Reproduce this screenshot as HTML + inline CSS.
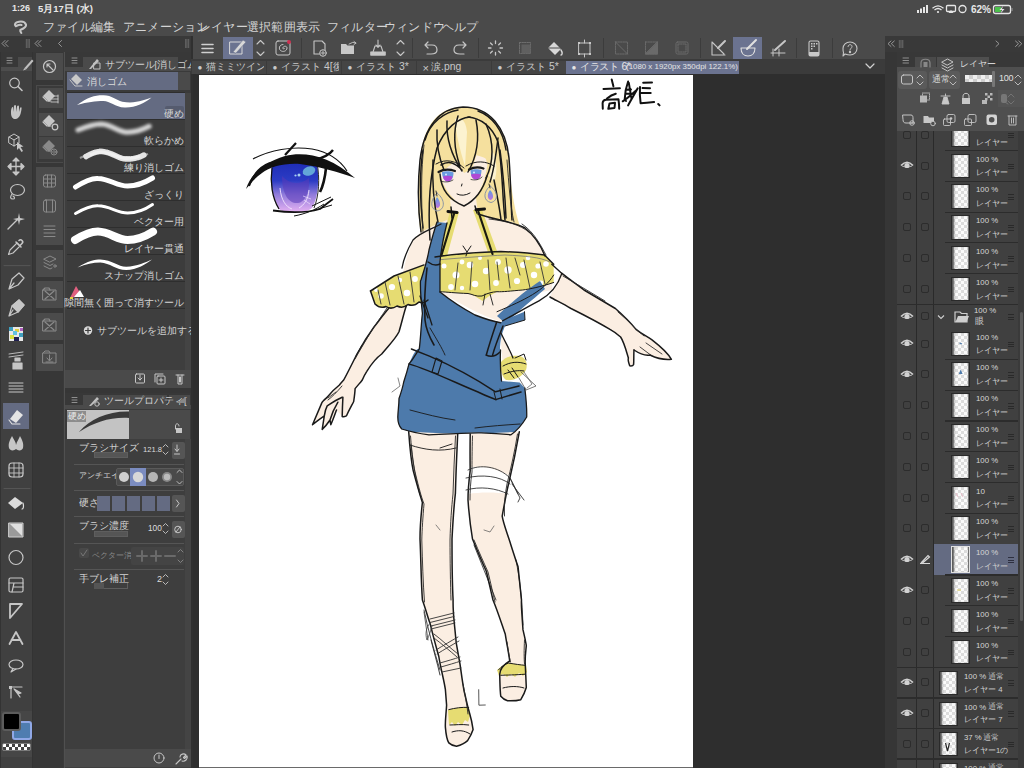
<!DOCTYPE html><html><head><meta charset="utf-8"><style>
*{margin:0;padding:0;box-sizing:border-box}
html,body{width:1024px;height:768px;overflow:hidden;background:#4a4a4a}
body{position:relative;font-family:"Liberation Sans",sans-serif}
div{position:absolute}
.t{white-space:nowrap;line-height:1}
svg{position:absolute;overflow:visible}
</style></head><body><div style="left:0px;top:0px;width:1024px;height:36px;background:#4a4a4a;"></div>
<div class="t" style="left:12px;top:4.42px;font-size:9px;color:#e8e8e8;font-weight:bold">1:26</div>
<div class="t" style="left:38px;top:4.36px;font-size:9.5px;color:#e8e8e8;font-weight:bold">5月17日 (水)</div>
<div class="t" style="left:971px;top:4.80px;font-size:10px;color:#e8e8e8;font-weight:bold">62%</div>
<div class="t" style="left:43px;top:22.27px;font-size:11.5px;color:#d4d4d4;letter-spacing:0.2px">ファイル</div>
<div class="t" style="left:91px;top:22.27px;font-size:11.5px;color:#d4d4d4;letter-spacing:0.2px">編集</div>
<div class="t" style="left:123px;top:22.27px;font-size:11.5px;color:#d4d4d4;letter-spacing:0.2px">アニメーション</div>
<div class="t" style="left:199px;top:22.27px;font-size:11.5px;color:#d4d4d4;letter-spacing:0.2px">レイヤー</div>
<div class="t" style="left:247px;top:22.27px;font-size:11.5px;color:#d4d4d4;letter-spacing:0.2px">選択範囲</div>
<div class="t" style="left:296px;top:22.27px;font-size:11.5px;color:#d4d4d4;letter-spacing:0.2px">表示</div>
<div class="t" style="left:327px;top:22.27px;font-size:11.5px;color:#d4d4d4;letter-spacing:0.2px">フィルター</div>
<div class="t" style="left:384px;top:22.27px;font-size:11.5px;color:#d4d4d4;letter-spacing:0.2px">ウィンドウ</div>
<div class="t" style="left:442px;top:22.27px;font-size:11.5px;color:#d4d4d4;letter-spacing:0.2px">ヘルプ</div>
<svg style="left:0;top:0" width="1024" height="36" viewBox="0 0 1024 36">
<g fill="#e6e6e6">
<rect x="917" y="10" width="2" height="3"/><rect x="920" y="8.5" width="2" height="4.5"/><rect x="923" y="7" width="2" height="6"/><rect x="926" y="5" width="2" height="8"/>
</g>
<g fill="none" stroke="#e6e6e6" stroke-width="1.3">
<path d="M932.5 8.2 Q938 3.5 943.5 8.2"/><path d="M934.5 10 Q938 7 941.5 10"/>
<rect x="946.5" y="5.5" width="9" height="6" rx="1"/>
<circle cx="962.5" cy="9" r="3.5"/>
<rect x="993.5" y="5.5" width="17" height="8" rx="2"/>
</g>
<circle cx="938" cy="12" r="1.1" fill="#e6e6e6"/>
<path d="M948.5 13 L951 10 L953.5 13 Z" fill="#e6e6e6"/>
<rect x="995" y="7" width="6" height="5" fill="#4cc14c"/>
<path d="M1003 6 L999.5 10 L1002 10 L1000.5 13.5 L1004.5 9 L1002 9 Z" fill="#e6e6e6"/>
<rect x="1011.5" y="8" width="1" height="3" fill="#999"/>
<path d="M21.5,25 C19.5,24.2 17.5,25.5 15.8,26.2 C14,24.5 15,22.3 19,21.7 C22.3,21.2 25.2,22.2 26,24.6 C26.6,27 24,28.6 20.3,30 C20,31 20.8,32.3 21.3,33" fill="none" stroke="#c6c6c6" stroke-width="2.1" stroke-linecap="round" stroke-linejoin="round"/>
</svg>
<div style="left:0px;top:36px;width:193px;height:16px;background:#393939;"></div>
<div style="left:885px;top:36px;width:139px;height:16px;background:#393939;"></div>
<div style="left:0px;top:52px;width:33px;height:716px;background:#333333;"></div>
<div style="left:1px;top:52px;width:31px;height:716px;background:#404040;"></div>
<div style="left:1px;top:52px;width:31px;height:15px;background:#383838;"></div>
<div style="left:18px;top:57px;width:14px;height:10px;background:#4a4a4a;"></div>
<div style="left:1px;top:67px;width:31px;height:4px;background:#4d4d4d;"></div>
<div style="left:3px;top:403px;width:26px;height:25.5px;background:#646b82;"></div>
<div style="left:1px;top:711px;width:31px;height:46px;background:#464646;"></div>
<div style="left:11.5px;top:720.8px;width:20.3px;height:19.5px;background:#4f7db0;border:2px solid #90a8e6;border-radius:3px"></div>
<div style="left:2px;top:712px;width:19px;height:18.5px;background:#000000;border:2px solid #5c5c5c;border-radius:3px"></div>
<div style="left:2px;top:742.8px;width:29px;height:8.6px;background:#ffffff;border:1px solid #7a7a7a;border-radius:2px;background-image:linear-gradient(45deg,#444 25%,transparent 25%,transparent 75%,#444 75%),linear-gradient(45deg,#444 25%,transparent 25%,transparent 75%,#444 75%);background-size:6px 6px;background-position:0 0,3px 3px"></div>
<svg style="left:0;top:0" width="40" height="360" viewBox="0 0 40 360">
<rect x="9" y="327" width="14" height="14" fill="#e8e8e8"/>
<rect x="9" y="327" width="4" height="4" fill="#40a0c0"/><rect x="15" y="329" width="4" height="3" fill="#e0d040"/><rect x="19" y="333" width="4" height="4" fill="#40a0c0"/><rect x="10" y="335" width="4" height="4" fill="#d8e040"/><rect x="14" y="337" width="5" height="4" fill="#202050"/><rect x="13" y="331" width="4" height="4" fill="#60c0e0"/><rect x="20" y="328" width="3" height="3" fill="#b060c0"/>
</svg>
<div style="left:33px;top:52px;width:30px;height:716px;background:#373737;"></div>
<div style="left:36px;top:53px;width:27px;height:27px;background:#4b4b4b;"></div>
<div style="left:36px;top:85px;width:28px;height:78px;background:#3a3a3a;border:1px solid #4a4a4a"></div>
<div style="left:39px;top:88px;width:24px;height:20px;background:#4b4b4b;"></div>
<div style="left:39px;top:113px;width:24px;height:23px;background:#4b4b4b;"></div>
<div style="left:39px;top:137px;width:24px;height:22px;background:#474747;"></div>
<div style="left:36px;top:167px;width:27px;height:78px;background:#4b4b4b;"></div>
<div style="left:36px;top:250px;width:27px;height:27px;background:#4b4b4b;"></div>
<div style="left:36px;top:281px;width:27px;height:27px;background:#4b4b4b;"></div>
<div style="left:36px;top:313px;width:27px;height:27px;background:#4b4b4b;"></div>
<div style="left:36px;top:344px;width:27px;height:27px;background:#4b4b4b;"></div>
<div style="left:63px;top:52px;width:2px;height:716px;background:#3a3a3a;"></div>
<div style="left:64.2px;top:52px;width:0.9px;height:716px;background:#505050;"></div>
<div style="left:65px;top:52px;width:126px;height:716px;background:#3e3e3e;"></div>
<div style="left:65px;top:52px;width:126px;height:15px;background:#383838;"></div>
<div style="left:83px;top:57px;width:95px;height:10px;background:#4a4a4a;"></div>
<div style="left:65px;top:67px;width:126px;height:4px;background:#4a4a4a;"></div>
<div style="left:65px;top:71px;width:126px;height:22px;background:#3a3a3a;"></div>
<div style="left:67px;top:72px;width:111px;height:18px;background:#646b82;"></div>
<div style="left:178px;top:72px;width:12px;height:18px;background:#4a4a4a;"></div>
<div class="t" style="left:104.5px;top:59.56px;font-size:9.6px;color:#d0d0d0;">サブツール[消しゴム]</div>
<div class="t" style="left:86.5px;top:76.50px;font-size:10px;color:#dcdcdc;">消しゴム</div>
<div style="left:185px;top:93px;width:6px;height:277px;background:#444444;"></div>
<div style="left:67px;top:92px;width:118px;height:1px;background:#2e2e2e;"></div>
<div style="left:67px;top:93px;width:118px;height:26px;background:#646b82;"></div>
<div style="left:165px;top:106px;width:18.5px;height:11.2px;background:#555b6e;border-radius:2px"></div>
<div class="t" style="right:840.5px;top:108.50px;font-size:10px;color:#d6d6d6;">硬め</div>
<div style="left:67px;top:119px;width:118px;height:1px;background:#2e2e2e;"></div>
<div style="left:67px;top:120px;width:118px;height:26px;background:#3c3c3c;"></div>
<div class="t" style="right:840.5px;top:135.50px;font-size:10px;color:#d6d6d6;">軟らかめ</div>
<div style="left:67px;top:146px;width:118px;height:1px;background:#2e2e2e;"></div>
<div style="left:67px;top:147px;width:118px;height:26px;background:#3c3c3c;"></div>
<div class="t" style="right:840.5px;top:162.50px;font-size:10px;color:#d6d6d6;">練り消しゴム</div>
<div style="left:67px;top:173px;width:118px;height:1px;background:#2e2e2e;"></div>
<div style="left:67px;top:174px;width:118px;height:26px;background:#3c3c3c;"></div>
<div class="t" style="right:840.5px;top:189.50px;font-size:10px;color:#d6d6d6;">ざっくり</div>
<div style="left:67px;top:200px;width:118px;height:1px;background:#2e2e2e;"></div>
<div style="left:67px;top:201px;width:118px;height:26px;background:#3c3c3c;"></div>
<div class="t" style="right:840.5px;top:216.50px;font-size:10px;color:#d6d6d6;">ベクター用</div>
<div style="left:67px;top:227px;width:118px;height:1px;background:#2e2e2e;"></div>
<div style="left:67px;top:228px;width:118px;height:26px;background:#3c3c3c;"></div>
<div class="t" style="right:840.5px;top:243.50px;font-size:10px;color:#d6d6d6;">レイヤー貫通</div>
<div style="left:67px;top:254px;width:118px;height:1px;background:#2e2e2e;"></div>
<div style="left:67px;top:255px;width:118px;height:26px;background:#3c3c3c;"></div>
<div class="t" style="right:840.5px;top:270.50px;font-size:10px;color:#d6d6d6;">スナップ消しゴム</div>
<div style="left:67px;top:281px;width:118px;height:1px;background:#2e2e2e;"></div>
<div style="left:67px;top:282px;width:118px;height:26px;background:#3c3c3c;"></div>
<div class="t" style="right:840.5px;top:297.50px;font-size:10px;color:#d6d6d6;">隙間無く囲って消すツール</div>
<div style="left:67px;top:308px;width:118px;height:1px;background:#2e2e2e;"></div>
<div class="t" style="left:97px;top:325.50px;font-size:10px;color:#d0d0d0;">サブツールを追加する</div>
<div style="left:65px;top:370px;width:126px;height:18px;background:#4a4a4a;"></div>
<div style="left:65px;top:388px;width:126px;height:5px;background:#363636;"></div>
<div style="left:65px;top:393px;width:126px;height:12px;background:#383838;"></div>
<div style="left:83px;top:395px;width:84px;height:10px;background:#4a4a4a;"></div>
<div style="left:169px;top:395px;width:21px;height:10px;background:#4a4a4a;"></div>
<div style="left:65px;top:405px;width:126px;height:4px;background:#4a4a4a;"></div>
<div class="t" style="left:104px;top:395.56px;font-size:9.6px;color:#d0d0d0;">ツールプロパティ[</div>
<div style="left:65px;top:409px;width:126px;height:30px;background:#3a3a3a;"></div>
<div style="left:67px;top:410px;width:62px;height:28.6px;background:#c3c3c3;"></div>
<div style="left:129px;top:410px;width:61px;height:28.6px;background:#4a4a4a;"></div>
<div style="left:67px;top:411px;width:19px;height:11px;background:#8c8c8c;"></div>
<div class="t" style="left:67.5px;top:411.65px;font-size:9px;color:#eeeeee;">硬め</div>
<div style="left:65px;top:439px;width:126px;height:310px;background:#3e3e3e;"></div>
<div style="left:185px;top:439px;width:6px;height:310px;background:#444444;"></div>
<div class="t" style="left:79px;top:442.50px;font-size:10px;color:#d4d4d4;">ブラシサイズ</div>
<div style="left:94px;top:452px;width:34px;height:6px;background:#555555;border:1px solid #5e5e5e"></div>
<div class="t" style="left:143px;top:446.09px;font-size:7.6px;color:#dcdcdc;">121.8</div>
<div style="left:172px;top:442px;width:12.5px;height:17px;background:#555555;border-radius:2px"></div>
<div style="left:74px;top:464px;width:110px;height:1px;background:#555555;"></div>
<div class="t" style="left:79px;top:471.86px;font-size:7.6px;color:#d4d4d4;">アンチエイリ</div>
<div style="left:116px;top:468px;width:68px;height:18px;background:#4a4a4a;border:1px solid #5a5a5a;border-radius:2px"></div>
<div style="left:130px;top:468px;width:16px;height:18px;background:#7b8cc0;"></div>
<div style="left:74px;top:490px;width:110px;height:1px;background:#555555;"></div>
<div class="t" style="left:79px;top:497.57px;font-size:9.5px;color:#d4d4d4;">硬さ</div>
<div style="left:97px;top:496px;width:13px;height:15px;background:#646b82;"></div>
<div style="left:112px;top:496px;width:13px;height:15px;background:#646b82;"></div>
<div style="left:127px;top:496px;width:13px;height:15px;background:#646b82;"></div>
<div style="left:142px;top:496px;width:13px;height:15px;background:#646b82;"></div>
<div style="left:157px;top:496px;width:13px;height:15px;background:#646b82;"></div>
<div style="left:172px;top:495px;width:12.5px;height:17px;background:#555555;border-radius:2px"></div>
<div style="left:74px;top:516px;width:110px;height:1px;background:#555555;"></div>
<div class="t" style="left:79px;top:520.50px;font-size:10px;color:#d4d4d4;">ブラシ濃度</div>
<div style="left:94px;top:531px;width:34px;height:6px;background:#555555;border:1px solid #5e5e5e"></div>
<div class="t" style="left:148px;top:524.00px;font-size:8.3px;color:#dcdcdc;">100</div>
<div style="left:172px;top:521px;width:12.5px;height:17px;background:#555555;border-radius:2px"></div>
<div style="left:74px;top:543px;width:110px;height:1px;background:#555555;"></div>
<div style="left:79px;top:548px;width:10px;height:10px;background:#484848;border-radius:2px"></div>
<div class="t" style="left:92px;top:551.80px;font-size:8px;color:#8a8a8a;">ベクター消去</div>
<div style="left:131px;top:547px;width:53px;height:18px;background:#444444;border-radius:2px"></div>
<div style="left:74px;top:569px;width:110px;height:1px;background:#555555;"></div>
<div class="t" style="left:79px;top:573.50px;font-size:10px;color:#d4d4d4;">手ブレ補正</div>
<div style="left:94px;top:583px;width:34px;height:6px;background:#3e3e3e;border-bottom:1px solid #5e5e5e;border-right:1px solid #5e5e5e"></div>
<div style="left:94px;top:583px;width:10px;height:6px;background:#555555;"></div>
<div class="t" style="left:157px;top:574.92px;font-size:9px;color:#dcdcdc;">2</div>
<div style="left:65px;top:749px;width:126px;height:18px;background:#4a4a4a;"></div>
<div style="left:191px;top:36px;width:2px;height:732px;background:#303030;"></div>
<div style="left:193px;top:36px;width:692px;height:23px;background:#4a4a4a;"></div>
<div style="left:222.5px;top:37px;width:30px;height:22px;background:#6b7390;"></div>
<div style="left:732.5px;top:37px;width:29.5px;height:22px;background:#6b7390;"></div>
<div style="left:300.5px;top:38px;width:1px;height:20px;background:#3c3c3c;"></div>
<div style="left:412px;top:38px;width:1px;height:20px;background:#3c3c3c;"></div>
<div style="left:477.5px;top:38px;width:1px;height:20px;background:#3c3c3c;"></div>
<div style="left:603px;top:38px;width:1px;height:20px;background:#3c3c3c;"></div>
<div style="left:700px;top:38px;width:1px;height:20px;background:#3c3c3c;"></div>
<div style="left:795.5px;top:38px;width:1px;height:20px;background:#3c3c3c;"></div>
<div style="left:831.5px;top:38px;width:1px;height:20px;background:#3c3c3c;"></div>
<div style="left:191px;top:59px;width:694px;height:15px;background:#3b3b3b;"></div>
<div style="left:192px;top:60.5px;width:74px;height:13.5px;background:#454545;overflow:hidden"></div>
<div class="t" style="left:197.5px;top:63.54px;font-size:8px;color:#c8c8c8;">●</div>
<div style="left:206px;top:60.5px;width:58px;height:13.5px;overflow:hidden"><div class="t" style="left:0;top:1.94px;font-size:10.4px;color:#c8c8c8">猫ミミツインテ</div></div>
<div style="left:267px;top:60.5px;width:74px;height:13.5px;background:#454545;overflow:hidden"></div>
<div class="t" style="left:272.5px;top:63.54px;font-size:8px;color:#c8c8c8;">●</div>
<div style="left:281px;top:60.5px;width:58px;height:13.5px;overflow:hidden"><div class="t" style="left:0;top:1.94px;font-size:10.4px;color:#c8c8c8">イラスト 4[復元</div></div>
<div style="left:342px;top:60.5px;width:74px;height:13.5px;background:#454545;overflow:hidden"></div>
<div class="t" style="left:347.5px;top:63.54px;font-size:8px;color:#c8c8c8;">●</div>
<div style="left:356px;top:60.5px;width:58px;height:13.5px;overflow:hidden"><div class="t" style="left:0;top:1.94px;font-size:10.4px;color:#c8c8c8">イラスト 3*</div></div>
<div style="left:417px;top:60.5px;width:74px;height:13.5px;background:#454545;overflow:hidden"></div>
<div class="t" style="left:422.5px;top:63.18px;font-size:11px;color:#c8c8c8;">×</div>
<div style="left:431px;top:60.5px;width:58px;height:13.5px;overflow:hidden"><div class="t" style="left:0;top:1.94px;font-size:10.4px;color:#c8c8c8">涙.png</div></div>
<div style="left:492px;top:60.5px;width:74px;height:13.5px;background:#454545;overflow:hidden"></div>
<div class="t" style="left:497.5px;top:63.54px;font-size:8px;color:#c8c8c8;">●</div>
<div style="left:506px;top:60.5px;width:58px;height:13.5px;overflow:hidden"><div class="t" style="left:0;top:1.94px;font-size:10.4px;color:#c8c8c8">イラスト 5*</div></div>
<div style="left:566px;top:60.5px;width:173px;height:13.5px;background:#6b7390;"></div>
<div class="t" style="left:571.5px;top:63.54px;font-size:8px;color:#e4e4e4;">●</div>
<div class="t" style="left:580px;top:62.44px;font-size:10.4px;color:#e4e4e4;letter-spacing:-0.3px">イラスト 6*</div>
<div class="t" style="left:626px;top:63.05px;font-size:7.9px;color:#e4e4e4;">(1080 x 1920px 350dpi 122.1%)</div>
<div style="left:193px;top:74px;width:692px;height:694px;background:#2e2e2e;"></div>
<div style="left:198.75px;top:74.7px;width:494.3px;height:692.3px;background:#ffffff;"></div>
<div style="left:198.75px;top:767px;width:494.3px;height:1px;background:#6a6a6a;"></div>
<div style="left:885px;top:52px;width:139px;height:79px;background:#383838;"></div>
<div style="left:885px;top:52px;width:12px;height:716px;background:#363636;"></div>
<div style="left:897px;top:52px;width:121px;height:716px;background:#404040;"></div>
<div style="left:1018px;top:131px;width:6px;height:637px;background:#3a3a3a;"></div>
<div style="left:1019.5px;top:312px;width:3px;height:309px;background:#5a5a5a;border-radius:2px"></div>
<div style="left:916px;top:131px;width:1px;height:637px;background:#2a2a2a;"></div>
<div style="left:933px;top:131px;width:1px;height:637px;background:#2a2a2a;"></div>
<div style="left:944.5px;top:149.9px;width:73.5px;height:1.2px;background:#2c2c2c;"></div>
<div style="left:903px;top:130.7px;width:8px;height:8px;background:transparent;border:1px solid #2c2c2c;border-radius:2px"></div>
<div style="left:921px;top:130.7px;width:8px;height:8px;background:transparent;border:1px solid #2c2c2c;border-radius:2px"></div>
<div style="left:950.5px;top:122.7px;width:19px;height:24.5px;background:#fafafa;background-image:linear-gradient(45deg,#dcdcdc 25%,transparent 25%,transparent 75%,#dcdcdc 75%),linear-gradient(45deg,#dcdcdc 25%,transparent 25%,transparent 75%,#dcdcdc 75%);background-size:6px 6px;background-position:0 0,3px 3px;border:1px solid #2a2a2a;box-shadow:inset 3px 0 2px -1px #555, inset -2px 0 1px -1px #666"></div>
<div class="t" style="left:976px;top:124.76px;font-size:7.8px;color:#d6d6d6;">100 %</div>
<div class="t" style="left:976px;top:138.54px;font-size:7.7px;color:#cfcfcf;">レイヤー</div>
<div style="left:1008px;top:132.7px;width:6px;height:1.1px;background:#2a2a2a;"></div>
<div style="left:1008px;top:135.0px;width:6px;height:1.1px;background:#2a2a2a;"></div>
<div style="left:1008px;top:137.29999999999998px;width:6px;height:1.1px;background:#2a2a2a;"></div>
<div style="left:944.5px;top:180.70000000000002px;width:73.5px;height:1.2px;background:#2c2c2c;"></div>
<svg style="left:899.5px;top:160.0px" width="14" height="10" viewBox="0 0 14 10"><path d="M1 5.5 Q7 -1 13 5.5" fill="none" stroke="#d2d2d2" stroke-width="1.6"/><path d="M2 6 Q7 9 12 6" fill="none" stroke="#d2d2d2" stroke-width="0.8"/><circle cx="7" cy="5.5" r="2.6" fill="#d2d2d2"/></svg>
<div style="left:921px;top:161.5px;width:8px;height:8px;background:transparent;border:1px solid #2c2c2c;border-radius:2px"></div>
<div style="left:950.5px;top:153.5px;width:19px;height:24.5px;background:#fafafa;background-image:linear-gradient(45deg,#dcdcdc 25%,transparent 25%,transparent 75%,#dcdcdc 75%),linear-gradient(45deg,#dcdcdc 25%,transparent 25%,transparent 75%,#dcdcdc 75%);background-size:6px 6px;background-position:0 0,3px 3px;border:1px solid #2a2a2a;box-shadow:inset 3px 0 2px -1px #555, inset -2px 0 1px -1px #666"></div>
<div class="t" style="left:976px;top:155.56px;font-size:7.8px;color:#d6d6d6;">100 %</div>
<div class="t" style="left:976px;top:169.34px;font-size:7.7px;color:#cfcfcf;">レイヤー</div>
<div style="left:1008px;top:163.5px;width:6px;height:1.1px;background:#2a2a2a;"></div>
<div style="left:1008px;top:165.8px;width:6px;height:1.1px;background:#2a2a2a;"></div>
<div style="left:1008px;top:168.1px;width:6px;height:1.1px;background:#2a2a2a;"></div>
<div style="left:944.5px;top:211.50000000000003px;width:73.5px;height:1.2px;background:#2c2c2c;"></div>
<div style="left:903px;top:192.3px;width:8px;height:8px;background:transparent;border:1px solid #2c2c2c;border-radius:2px"></div>
<div style="left:921px;top:192.3px;width:8px;height:8px;background:transparent;border:1px solid #2c2c2c;border-radius:2px"></div>
<div style="left:950.5px;top:184.3px;width:19px;height:24.5px;background:#fafafa;background-image:linear-gradient(45deg,#dcdcdc 25%,transparent 25%,transparent 75%,#dcdcdc 75%),linear-gradient(45deg,#dcdcdc 25%,transparent 25%,transparent 75%,#dcdcdc 75%);background-size:6px 6px;background-position:0 0,3px 3px;border:1px solid #2a2a2a;box-shadow:inset 3px 0 2px -1px #555, inset -2px 0 1px -1px #666"></div>
<div class="t" style="left:976px;top:186.36px;font-size:7.8px;color:#d6d6d6;">100 %</div>
<div class="t" style="left:976px;top:200.15px;font-size:7.7px;color:#cfcfcf;">レイヤー</div>
<div style="left:1008px;top:194.3px;width:6px;height:1.1px;background:#2a2a2a;"></div>
<div style="left:1008px;top:196.60000000000002px;width:6px;height:1.1px;background:#2a2a2a;"></div>
<div style="left:1008px;top:198.9px;width:6px;height:1.1px;background:#2a2a2a;"></div>
<div style="left:944.5px;top:242.3px;width:73.5px;height:1.2px;background:#2c2c2c;"></div>
<div style="left:903px;top:223.1px;width:8px;height:8px;background:transparent;border:1px solid #2c2c2c;border-radius:2px"></div>
<div style="left:921px;top:223.1px;width:8px;height:8px;background:transparent;border:1px solid #2c2c2c;border-radius:2px"></div>
<div style="left:950.5px;top:215.1px;width:19px;height:24.5px;background:#fafafa;background-image:linear-gradient(45deg,#dcdcdc 25%,transparent 25%,transparent 75%,#dcdcdc 75%),linear-gradient(45deg,#dcdcdc 25%,transparent 25%,transparent 75%,#dcdcdc 75%);background-size:6px 6px;background-position:0 0,3px 3px;border:1px solid #2a2a2a;box-shadow:inset 3px 0 2px -1px #555, inset -2px 0 1px -1px #666"></div>
<div class="t" style="left:976px;top:217.16px;font-size:7.8px;color:#d6d6d6;">100 %</div>
<div class="t" style="left:976px;top:230.94px;font-size:7.7px;color:#cfcfcf;">レイヤー</div>
<div style="left:1008px;top:225.1px;width:6px;height:1.1px;background:#2a2a2a;"></div>
<div style="left:1008px;top:227.4px;width:6px;height:1.1px;background:#2a2a2a;"></div>
<div style="left:1008px;top:229.7px;width:6px;height:1.1px;background:#2a2a2a;"></div>
<div style="left:944.5px;top:273.09999999999997px;width:73.5px;height:1.2px;background:#2c2c2c;"></div>
<div style="left:903px;top:253.9px;width:8px;height:8px;background:transparent;border:1px solid #2c2c2c;border-radius:2px"></div>
<div style="left:921px;top:253.9px;width:8px;height:8px;background:transparent;border:1px solid #2c2c2c;border-radius:2px"></div>
<div style="left:950.5px;top:245.9px;width:19px;height:24.5px;background:#fafafa;background-image:linear-gradient(45deg,#dcdcdc 25%,transparent 25%,transparent 75%,#dcdcdc 75%),linear-gradient(45deg,#dcdcdc 25%,transparent 25%,transparent 75%,#dcdcdc 75%);background-size:6px 6px;background-position:0 0,3px 3px;border:1px solid #2a2a2a;box-shadow:inset 3px 0 2px -1px #555, inset -2px 0 1px -1px #666"></div>
<div class="t" style="left:976px;top:247.96px;font-size:7.8px;color:#d6d6d6;">100 %</div>
<div class="t" style="left:976px;top:261.75px;font-size:7.7px;color:#cfcfcf;">レイヤー</div>
<div style="left:1008px;top:255.9px;width:6px;height:1.1px;background:#2a2a2a;"></div>
<div style="left:1008px;top:258.2px;width:6px;height:1.1px;background:#2a2a2a;"></div>
<div style="left:1008px;top:260.5px;width:6px;height:1.1px;background:#2a2a2a;"></div>
<div style="left:944.5px;top:303.9px;width:73.5px;height:1.2px;background:#2c2c2c;"></div>
<div style="left:903px;top:284.7px;width:8px;height:8px;background:transparent;border:1px solid #2c2c2c;border-radius:2px"></div>
<div style="left:921px;top:284.7px;width:8px;height:8px;background:transparent;border:1px solid #2c2c2c;border-radius:2px"></div>
<div style="left:950.5px;top:276.7px;width:19px;height:24.5px;background:#fafafa;background-image:linear-gradient(45deg,#dcdcdc 25%,transparent 25%,transparent 75%,#dcdcdc 75%),linear-gradient(45deg,#dcdcdc 25%,transparent 25%,transparent 75%,#dcdcdc 75%);background-size:6px 6px;background-position:0 0,3px 3px;border:1px solid #2a2a2a;box-shadow:inset 3px 0 2px -1px #555, inset -2px 0 1px -1px #666"></div>
<div class="t" style="left:976px;top:278.76px;font-size:7.8px;color:#d6d6d6;">100 %</div>
<div class="t" style="left:976px;top:292.55px;font-size:7.7px;color:#cfcfcf;">レイヤー</div>
<div style="left:1008px;top:286.7px;width:6px;height:1.1px;background:#2a2a2a;"></div>
<div style="left:1008px;top:289.0px;width:6px;height:1.1px;background:#2a2a2a;"></div>
<div style="left:1008px;top:291.3px;width:6px;height:1.1px;background:#2a2a2a;"></div>
<div style="left:944.5px;top:358.8px;width:73.5px;height:1.2px;background:#2c2c2c;"></div>
<svg style="left:899.5px;top:338.1px" width="14" height="10" viewBox="0 0 14 10"><path d="M1 5.5 Q7 -1 13 5.5" fill="none" stroke="#d2d2d2" stroke-width="1.6"/><path d="M2 6 Q7 9 12 6" fill="none" stroke="#d2d2d2" stroke-width="0.8"/><circle cx="7" cy="5.5" r="2.6" fill="#d2d2d2"/></svg>
<div style="left:921px;top:339.6px;width:8px;height:8px;background:transparent;border:1px solid #2c2c2c;border-radius:2px"></div>
<div style="left:950.5px;top:331.6px;width:19px;height:24.5px;background:#fafafa;background-image:linear-gradient(45deg,#dcdcdc 25%,transparent 25%,transparent 75%,#dcdcdc 75%),linear-gradient(45deg,#dcdcdc 25%,transparent 25%,transparent 75%,#dcdcdc 75%);background-size:6px 6px;background-position:0 0,3px 3px;border:1px solid #2a2a2a;box-shadow:inset 3px 0 2px -1px #555, inset -2px 0 1px -1px #666"></div>
<div class="t" style="left:976px;top:333.66px;font-size:7.8px;color:#d6d6d6;">100 %</div>
<div class="t" style="left:976px;top:347.45px;font-size:7.7px;color:#cfcfcf;">レイヤー</div>
<div style="left:1008px;top:341.6px;width:6px;height:1.1px;background:#2a2a2a;"></div>
<div style="left:1008px;top:343.90000000000003px;width:6px;height:1.1px;background:#2a2a2a;"></div>
<div style="left:1008px;top:346.20000000000005px;width:6px;height:1.1px;background:#2a2a2a;"></div>
<div style="left:944.5px;top:389.59999999999997px;width:73.5px;height:1.2px;background:#2c2c2c;"></div>
<svg style="left:899.5px;top:368.9px" width="14" height="10" viewBox="0 0 14 10"><path d="M1 5.5 Q7 -1 13 5.5" fill="none" stroke="#d2d2d2" stroke-width="1.6"/><path d="M2 6 Q7 9 12 6" fill="none" stroke="#d2d2d2" stroke-width="0.8"/><circle cx="7" cy="5.5" r="2.6" fill="#d2d2d2"/></svg>
<div style="left:921px;top:370.4px;width:8px;height:8px;background:transparent;border:1px solid #2c2c2c;border-radius:2px"></div>
<div style="left:950.5px;top:362.4px;width:19px;height:24.5px;background:#fafafa;background-image:linear-gradient(45deg,#dcdcdc 25%,transparent 25%,transparent 75%,#dcdcdc 75%),linear-gradient(45deg,#dcdcdc 25%,transparent 25%,transparent 75%,#dcdcdc 75%);background-size:6px 6px;background-position:0 0,3px 3px;border:1px solid #2a2a2a;box-shadow:inset 3px 0 2px -1px #555, inset -2px 0 1px -1px #666"></div>
<div class="t" style="left:976px;top:364.46px;font-size:7.8px;color:#d6d6d6;">100 %</div>
<div class="t" style="left:976px;top:378.25px;font-size:7.7px;color:#cfcfcf;">レイヤー</div>
<div style="left:1008px;top:372.4px;width:6px;height:1.1px;background:#2a2a2a;"></div>
<div style="left:1008px;top:374.7px;width:6px;height:1.1px;background:#2a2a2a;"></div>
<div style="left:1008px;top:377.0px;width:6px;height:1.1px;background:#2a2a2a;"></div>
<div style="left:944.5px;top:420.4px;width:73.5px;height:1.2px;background:#2c2c2c;"></div>
<div style="left:903px;top:401.2px;width:8px;height:8px;background:transparent;border:1px solid #2c2c2c;border-radius:2px"></div>
<div style="left:921px;top:401.2px;width:8px;height:8px;background:transparent;border:1px solid #2c2c2c;border-radius:2px"></div>
<div style="left:950.5px;top:393.2px;width:19px;height:24.5px;background:#fafafa;background-image:linear-gradient(45deg,#dcdcdc 25%,transparent 25%,transparent 75%,#dcdcdc 75%),linear-gradient(45deg,#dcdcdc 25%,transparent 25%,transparent 75%,#dcdcdc 75%);background-size:6px 6px;background-position:0 0,3px 3px;border:1px solid #2a2a2a;box-shadow:inset 3px 0 2px -1px #555, inset -2px 0 1px -1px #666"></div>
<div class="t" style="left:976px;top:395.26px;font-size:7.8px;color:#d6d6d6;">100 %</div>
<div class="t" style="left:976px;top:409.05px;font-size:7.7px;color:#cfcfcf;">レイヤー</div>
<div style="left:1008px;top:403.2px;width:6px;height:1.1px;background:#2a2a2a;"></div>
<div style="left:1008px;top:405.5px;width:6px;height:1.1px;background:#2a2a2a;"></div>
<div style="left:1008px;top:407.8px;width:6px;height:1.1px;background:#2a2a2a;"></div>
<div style="left:944.5px;top:451.2px;width:73.5px;height:1.2px;background:#2c2c2c;"></div>
<div style="left:903px;top:432.0px;width:8px;height:8px;background:transparent;border:1px solid #2c2c2c;border-radius:2px"></div>
<div style="left:921px;top:432.0px;width:8px;height:8px;background:transparent;border:1px solid #2c2c2c;border-radius:2px"></div>
<div style="left:950.5px;top:424.0px;width:19px;height:24.5px;background:#fafafa;background-image:linear-gradient(45deg,#dcdcdc 25%,transparent 25%,transparent 75%,#dcdcdc 75%),linear-gradient(45deg,#dcdcdc 25%,transparent 25%,transparent 75%,#dcdcdc 75%);background-size:6px 6px;background-position:0 0,3px 3px;border:1px solid #2a2a2a;box-shadow:inset 3px 0 2px -1px #555, inset -2px 0 1px -1px #666"></div>
<div class="t" style="left:976px;top:426.06px;font-size:7.8px;color:#d6d6d6;">100 %</div>
<div class="t" style="left:976px;top:439.85px;font-size:7.7px;color:#cfcfcf;">レイヤー</div>
<div style="left:1008px;top:434.0px;width:6px;height:1.1px;background:#2a2a2a;"></div>
<div style="left:1008px;top:436.3px;width:6px;height:1.1px;background:#2a2a2a;"></div>
<div style="left:1008px;top:438.6px;width:6px;height:1.1px;background:#2a2a2a;"></div>
<div style="left:944.5px;top:482.0px;width:73.5px;height:1.2px;background:#2c2c2c;"></div>
<div style="left:903px;top:462.8px;width:8px;height:8px;background:transparent;border:1px solid #2c2c2c;border-radius:2px"></div>
<div style="left:921px;top:462.8px;width:8px;height:8px;background:transparent;border:1px solid #2c2c2c;border-radius:2px"></div>
<div style="left:950.5px;top:454.8px;width:19px;height:24.5px;background:#fafafa;background-image:linear-gradient(45deg,#dcdcdc 25%,transparent 25%,transparent 75%,#dcdcdc 75%),linear-gradient(45deg,#dcdcdc 25%,transparent 25%,transparent 75%,#dcdcdc 75%);background-size:6px 6px;background-position:0 0,3px 3px;border:1px solid #2a2a2a;box-shadow:inset 3px 0 2px -1px #555, inset -2px 0 1px -1px #666"></div>
<div class="t" style="left:976px;top:456.86px;font-size:7.8px;color:#d6d6d6;">100 %</div>
<div class="t" style="left:976px;top:470.65px;font-size:7.7px;color:#cfcfcf;">レイヤー</div>
<div style="left:1008px;top:464.8px;width:6px;height:1.1px;background:#2a2a2a;"></div>
<div style="left:1008px;top:467.1px;width:6px;height:1.1px;background:#2a2a2a;"></div>
<div style="left:1008px;top:469.40000000000003px;width:6px;height:1.1px;background:#2a2a2a;"></div>
<div style="left:944.5px;top:512.8px;width:73.5px;height:1.2px;background:#2c2c2c;"></div>
<div style="left:903px;top:493.6px;width:8px;height:8px;background:transparent;border:1px solid #2c2c2c;border-radius:2px"></div>
<div style="left:921px;top:493.6px;width:8px;height:8px;background:transparent;border:1px solid #2c2c2c;border-radius:2px"></div>
<div style="left:950.5px;top:485.6px;width:19px;height:24.5px;background:#fafafa;background-image:linear-gradient(45deg,#dcdcdc 25%,transparent 25%,transparent 75%,#dcdcdc 75%),linear-gradient(45deg,#dcdcdc 25%,transparent 25%,transparent 75%,#dcdcdc 75%);background-size:6px 6px;background-position:0 0,3px 3px;border:1px solid #2a2a2a;box-shadow:inset 3px 0 2px -1px #555, inset -2px 0 1px -1px #666"></div>
<div class="t" style="left:976px;top:487.64px;font-size:8px;color:#d6d6d6;">10</div>
<div class="t" style="left:976px;top:501.45px;font-size:7.7px;color:#cfcfcf;">レイヤー</div>
<div style="left:1008px;top:495.6px;width:6px;height:1.1px;background:#2a2a2a;"></div>
<div style="left:1008px;top:497.90000000000003px;width:6px;height:1.1px;background:#2a2a2a;"></div>
<div style="left:1008px;top:500.20000000000005px;width:6px;height:1.1px;background:#2a2a2a;"></div>
<div style="left:944.5px;top:543.5999999999999px;width:73.5px;height:1.2px;background:#2c2c2c;"></div>
<div style="left:903px;top:524.4px;width:8px;height:8px;background:transparent;border:1px solid #2c2c2c;border-radius:2px"></div>
<div style="left:921px;top:524.4px;width:8px;height:8px;background:transparent;border:1px solid #2c2c2c;border-radius:2px"></div>
<div style="left:950.5px;top:516.4px;width:19px;height:24.5px;background:#fafafa;background-image:linear-gradient(45deg,#dcdcdc 25%,transparent 25%,transparent 75%,#dcdcdc 75%),linear-gradient(45deg,#dcdcdc 25%,transparent 25%,transparent 75%,#dcdcdc 75%);background-size:6px 6px;background-position:0 0,3px 3px;border:1px solid #2a2a2a;box-shadow:inset 3px 0 2px -1px #555, inset -2px 0 1px -1px #666"></div>
<div class="t" style="left:976px;top:518.46px;font-size:7.8px;color:#d6d6d6;">100 %</div>
<div class="t" style="left:976px;top:532.25px;font-size:7.7px;color:#cfcfcf;">レイヤー</div>
<div style="left:1008px;top:526.4px;width:6px;height:1.1px;background:#2a2a2a;"></div>
<div style="left:1008px;top:528.6999999999999px;width:6px;height:1.1px;background:#2a2a2a;"></div>
<div style="left:1008px;top:531.0px;width:6px;height:1.1px;background:#2a2a2a;"></div>
<div style="left:933.5px;top:544.2px;width:84.5px;height:30.8px;background:#646b82;"></div>
<div style="left:944.5px;top:574.4px;width:73.5px;height:1.2px;background:#2c2c2c;"></div>
<svg style="left:899.5px;top:553.7px" width="14" height="10" viewBox="0 0 14 10"><path d="M1 5.5 Q7 -1 13 5.5" fill="none" stroke="#d2d2d2" stroke-width="1.6"/><path d="M2 6 Q7 9 12 6" fill="none" stroke="#d2d2d2" stroke-width="0.8"/><circle cx="7" cy="5.5" r="2.6" fill="#d2d2d2"/></svg>
<svg style="left:919px;top:553.2px" width="12" height="12" viewBox="0 0 12 12"><path d="M1 10.5 H11 M2 10 L9 2.5 L10.5 4 L3.5 10" fill="none" stroke="#d8d8d8" stroke-width="1.2"/></svg>
<div style="left:950.5px;top:545.7px;width:19px;height:27px;background:#fafafa;background-image:linear-gradient(45deg,#dcdcdc 25%,transparent 25%,transparent 75%,#dcdcdc 75%),linear-gradient(45deg,#dcdcdc 25%,transparent 25%,transparent 75%,#dcdcdc 75%);background-size:6px 6px;background-position:0 0,3px 3px;border:1px solid #2a2a2a;box-shadow:inset 3px 0 2px -1px #555, inset -2px 0 1px -1px #666"></div>
<div style="left:950.5px;top:545.7px;width:19px;height:27px;background:transparent;border:1px solid #e0e0e0"></div>
<div class="t" style="left:976px;top:549.26px;font-size:7.8px;color:#d6d6d6;">100 %</div>
<div class="t" style="left:976px;top:563.05px;font-size:7.7px;color:#cfcfcf;">レイヤー</div>
<div style="left:1008px;top:557.2px;width:6px;height:1.1px;background:#2e3040;"></div>
<div style="left:1008px;top:559.5px;width:6px;height:1.1px;background:#2e3040;"></div>
<div style="left:1008px;top:561.8000000000001px;width:6px;height:1.1px;background:#2e3040;"></div>
<div style="left:944.5px;top:605.1999999999999px;width:73.5px;height:1.2px;background:#2c2c2c;"></div>
<svg style="left:899.5px;top:584.5px" width="14" height="10" viewBox="0 0 14 10"><path d="M1 5.5 Q7 -1 13 5.5" fill="none" stroke="#d2d2d2" stroke-width="1.6"/><path d="M2 6 Q7 9 12 6" fill="none" stroke="#d2d2d2" stroke-width="0.8"/><circle cx="7" cy="5.5" r="2.6" fill="#d2d2d2"/></svg>
<div style="left:921px;top:586.0px;width:8px;height:8px;background:transparent;border:1px solid #2c2c2c;border-radius:2px"></div>
<div style="left:950.5px;top:578.0px;width:19px;height:24.5px;background:#fafafa;background-image:linear-gradient(45deg,#dcdcdc 25%,transparent 25%,transparent 75%,#dcdcdc 75%),linear-gradient(45deg,#dcdcdc 25%,transparent 25%,transparent 75%,#dcdcdc 75%);background-size:6px 6px;background-position:0 0,3px 3px;border:1px solid #2a2a2a;box-shadow:inset 3px 0 2px -1px #555, inset -2px 0 1px -1px #666"></div>
<div class="t" style="left:976px;top:580.06px;font-size:7.8px;color:#d6d6d6;">100 %</div>
<div class="t" style="left:976px;top:593.85px;font-size:7.7px;color:#cfcfcf;">レイヤー</div>
<div style="left:1008px;top:588.0px;width:6px;height:1.1px;background:#2a2a2a;"></div>
<div style="left:1008px;top:590.3px;width:6px;height:1.1px;background:#2a2a2a;"></div>
<div style="left:1008px;top:592.6px;width:6px;height:1.1px;background:#2a2a2a;"></div>
<div style="left:944.5px;top:635.9999999999999px;width:73.5px;height:1.2px;background:#2c2c2c;"></div>
<div style="left:903px;top:616.8px;width:8px;height:8px;background:transparent;border:1px solid #2c2c2c;border-radius:2px"></div>
<div style="left:921px;top:616.8px;width:8px;height:8px;background:transparent;border:1px solid #2c2c2c;border-radius:2px"></div>
<div style="left:950.5px;top:608.8px;width:19px;height:24.5px;background:#fafafa;background-image:linear-gradient(45deg,#dcdcdc 25%,transparent 25%,transparent 75%,#dcdcdc 75%),linear-gradient(45deg,#dcdcdc 25%,transparent 25%,transparent 75%,#dcdcdc 75%);background-size:6px 6px;background-position:0 0,3px 3px;border:1px solid #2a2a2a;box-shadow:inset 3px 0 2px -1px #555, inset -2px 0 1px -1px #666"></div>
<div class="t" style="left:976px;top:610.86px;font-size:7.8px;color:#d6d6d6;">100 %</div>
<div class="t" style="left:976px;top:624.64px;font-size:7.7px;color:#cfcfcf;">レイヤー</div>
<div style="left:1008px;top:618.8px;width:6px;height:1.1px;background:#2a2a2a;"></div>
<div style="left:1008px;top:621.0999999999999px;width:6px;height:1.1px;background:#2a2a2a;"></div>
<div style="left:1008px;top:623.4px;width:6px;height:1.1px;background:#2a2a2a;"></div>
<div style="left:944.5px;top:666.8px;width:73.5px;height:1.2px;background:#2c2c2c;"></div>
<div style="left:903px;top:647.6px;width:8px;height:8px;background:transparent;border:1px solid #2c2c2c;border-radius:2px"></div>
<div style="left:921px;top:647.6px;width:8px;height:8px;background:transparent;border:1px solid #2c2c2c;border-radius:2px"></div>
<div style="left:950.5px;top:639.6px;width:19px;height:24.5px;background:#fafafa;background-image:linear-gradient(45deg,#dcdcdc 25%,transparent 25%,transparent 75%,#dcdcdc 75%),linear-gradient(45deg,#dcdcdc 25%,transparent 25%,transparent 75%,#dcdcdc 75%);background-size:6px 6px;background-position:0 0,3px 3px;border:1px solid #2a2a2a;box-shadow:inset 3px 0 2px -1px #555, inset -2px 0 1px -1px #666"></div>
<div class="t" style="left:976px;top:641.66px;font-size:7.8px;color:#d6d6d6;">100 %</div>
<div class="t" style="left:976px;top:655.45px;font-size:7.7px;color:#cfcfcf;">レイヤー</div>
<div style="left:1008px;top:649.6px;width:6px;height:1.1px;background:#2a2a2a;"></div>
<div style="left:1008px;top:651.9px;width:6px;height:1.1px;background:#2a2a2a;"></div>
<div style="left:1008px;top:654.2px;width:6px;height:1.1px;background:#2a2a2a;"></div>
<div style="left:897px;top:303.79999999999995px;width:121px;height:1.2px;background:#2c2c2c;"></div>
<svg style="left:899.5px;top:310.9px" width="14" height="10" viewBox="0 0 14 10"><path d="M1 5.5 Q7 -1 13 5.5" fill="none" stroke="#d2d2d2" stroke-width="1.6"/><path d="M2 6 Q7 9 12 6" fill="none" stroke="#d2d2d2" stroke-width="0.8"/><circle cx="7" cy="5.5" r="2.6" fill="#d2d2d2"/></svg>
<div style="left:921px;top:312.4px;width:8px;height:8px;background:transparent;border:1px solid #2c2c2c;border-radius:2px"></div>
<svg style="left:936px;top:314.4px" width="10" height="6" viewBox="0 0 10 6"><path d="M2 1.5 L5 4.5 L8 1.5" fill="none" stroke="#cfcfcf" stroke-width="1.1"/></svg>
<svg style="left:954px;top:310.4px" width="16" height="13" viewBox="0 0 16 13"><path d="M1 2 H6 L7.5 3.5 H13 V12 H1 Z" fill="none" stroke="#cfcfcf" stroke-width="1.2"/><path d="M1.5 12 L4 6 H15 L12.5 12 Z" fill="#cfcfcf"/></svg>
<div class="t" style="left:974px;top:307.46px;font-size:7.8px;color:#d6d6d6;">100 %</div>
<div class="t" style="left:975px;top:317.05px;font-size:9px;color:#cfcfcf;">眼</div>
<div style="left:1008px;top:314.4px;width:6px;height:1.1px;background:#2a2a2a;"></div>
<div style="left:1008px;top:316.7px;width:6px;height:1.1px;background:#2a2a2a;"></div>
<div style="left:1008px;top:319.0px;width:6px;height:1.1px;background:#2a2a2a;"></div>
<div style="left:897px;top:666.8px;width:121px;height:1.2px;background:#2c2c2c;"></div>
<svg style="left:899.5px;top:676.9px" width="14" height="10" viewBox="0 0 14 10"><path d="M1 5.5 Q7 -1 13 5.5" fill="none" stroke="#d2d2d2" stroke-width="1.6"/><path d="M2 6 Q7 9 12 6" fill="none" stroke="#d2d2d2" stroke-width="0.8"/><circle cx="7" cy="5.5" r="2.6" fill="#d2d2d2"/></svg>
<div style="left:921px;top:678.4px;width:8px;height:8px;background:transparent;border:1px solid #2c2c2c;border-radius:2px"></div>
<div style="left:938.5px;top:670.9px;width:19px;height:24px;background:#fafafa;background-image:linear-gradient(45deg,#dcdcdc 25%,transparent 25%,transparent 75%,#dcdcdc 75%),linear-gradient(45deg,#dcdcdc 25%,transparent 25%,transparent 75%,#dcdcdc 75%);background-size:6px 6px;background-position:0 0,3px 3px;border:1px solid #2a2a2a;box-shadow:inset 3px 0 2px -1px #555, inset -2px 0 1px -1px #666"></div>
<div class="t" style="left:964px;top:672.96px;font-size:7.8px;color:#d6d6d6;">100 %</div>
<div class="t" style="left:988px;top:672.70px;font-size:8px;color:#bfbfbf;">通常</div>
<div class="t" style="left:964px;top:685.75px;font-size:7.7px;color:#cfcfcf;">レイヤー 4</div>
<div style="left:1008px;top:680.4px;width:6px;height:1.1px;background:#2a2a2a;"></div>
<div style="left:1008px;top:682.6999999999999px;width:6px;height:1.1px;background:#2a2a2a;"></div>
<div style="left:1008px;top:685.0px;width:6px;height:1.1px;background:#2a2a2a;"></div>
<div style="left:897px;top:697.4px;width:121px;height:1.2px;background:#2c2c2c;"></div>
<svg style="left:899.5px;top:707.5px" width="14" height="10" viewBox="0 0 14 10"><path d="M1 5.5 Q7 -1 13 5.5" fill="none" stroke="#d2d2d2" stroke-width="1.6"/><path d="M2 6 Q7 9 12 6" fill="none" stroke="#d2d2d2" stroke-width="0.8"/><circle cx="7" cy="5.5" r="2.6" fill="#d2d2d2"/></svg>
<div style="left:921px;top:709.0px;width:8px;height:8px;background:transparent;border:1px solid #2c2c2c;border-radius:2px"></div>
<div style="left:938.5px;top:701.5px;width:19px;height:24px;background:#fafafa;background-image:linear-gradient(45deg,#dcdcdc 25%,transparent 25%,transparent 75%,#dcdcdc 75%),linear-gradient(45deg,#dcdcdc 25%,transparent 25%,transparent 75%,#dcdcdc 75%);background-size:6px 6px;background-position:0 0,3px 3px;border:1px solid #2a2a2a;box-shadow:inset 3px 0 2px -1px #555, inset -2px 0 1px -1px #666"></div>
<div class="t" style="left:964px;top:703.56px;font-size:7.8px;color:#d6d6d6;">100 %</div>
<div class="t" style="left:988px;top:703.30px;font-size:8px;color:#bfbfbf;">通常</div>
<div class="t" style="left:964px;top:716.35px;font-size:7.7px;color:#cfcfcf;">レイヤー 7</div>
<div style="left:1008px;top:711.0px;width:6px;height:1.1px;background:#2a2a2a;"></div>
<div style="left:1008px;top:713.3px;width:6px;height:1.1px;background:#2a2a2a;"></div>
<div style="left:1008px;top:715.6px;width:6px;height:1.1px;background:#2a2a2a;"></div>
<div style="left:897px;top:727.9px;width:121px;height:1.2px;background:#2c2c2c;"></div>
<div style="left:903px;top:739.5px;width:8px;height:8px;background:transparent;border:1px solid #2c2c2c;border-radius:2px"></div>
<div style="left:921px;top:739.5px;width:8px;height:8px;background:transparent;border:1px solid #2c2c2c;border-radius:2px"></div>
<div style="left:938.5px;top:732.0px;width:19px;height:24px;background:#fafafa;background-image:linear-gradient(45deg,#dcdcdc 25%,transparent 25%,transparent 75%,#dcdcdc 75%),linear-gradient(45deg,#dcdcdc 25%,transparent 25%,transparent 75%,#dcdcdc 75%);background-size:6px 6px;background-position:0 0,3px 3px;border:1px solid #2a2a2a;box-shadow:inset 3px 0 2px -1px #555, inset -2px 0 1px -1px #666"></div>
<div class="t" style="left:964px;top:734.06px;font-size:7.8px;color:#d6d6d6;">37 %</div>
<div class="t" style="left:983px;top:733.80px;font-size:8px;color:#bfbfbf;">通常</div>
<div class="t" style="left:964px;top:746.85px;font-size:7.7px;color:#cfcfcf;">レイヤー1の</div>
<div style="left:1008px;top:741.5px;width:6px;height:1.1px;background:#2a2a2a;"></div>
<div style="left:1008px;top:743.8px;width:6px;height:1.1px;background:#2a2a2a;"></div>
<div style="left:1008px;top:746.1px;width:6px;height:1.1px;background:#2a2a2a;"></div>
<div style="left:897px;top:758.4px;width:121px;height:1.2px;background:#2c2c2c;"></div>
<div style="left:903px;top:770.0px;width:8px;height:8px;background:transparent;border:1px solid #2c2c2c;border-radius:2px"></div>
<div style="left:921px;top:770.0px;width:8px;height:8px;background:transparent;border:1px solid #2c2c2c;border-radius:2px"></div>
<div style="left:938.5px;top:762.5px;width:19px;height:24px;background:#fafafa;background-image:linear-gradient(45deg,#dcdcdc 25%,transparent 25%,transparent 75%,#dcdcdc 75%),linear-gradient(45deg,#dcdcdc 25%,transparent 25%,transparent 75%,#dcdcdc 75%);background-size:6px 6px;background-position:0 0,3px 3px;border:1px solid #2a2a2a;box-shadow:inset 3px 0 2px -1px #555, inset -2px 0 1px -1px #666"></div>
<div class="t" style="left:964px;top:764.56px;font-size:7.8px;color:#d6d6d6;">100 %</div>
<div class="t" style="left:988px;top:764.30px;font-size:8px;color:#bfbfbf;">通常</div>
<div style="left:1008px;top:772.0px;width:6px;height:1.1px;background:#2a2a2a;"></div>
<div style="left:1008px;top:774.3px;width:6px;height:1.1px;background:#2a2a2a;"></div>
<div style="left:1008px;top:776.6px;width:6px;height:1.1px;background:#2a2a2a;"></div>
<div style="left:897px;top:52px;width:121px;height:15px;background:#383838;"></div>
<div style="left:915px;top:57px;width:21px;height:10px;background:#4a4a4a;"></div>
<div style="left:937px;top:57px;width:52px;height:10px;background:#4f4f4f;"></div>
<div class="t" style="left:960px;top:59.65px;font-size:9px;color:#d8d8d8;">レイヤー</div>
<div style="left:897px;top:67px;width:127px;height:64px;background:#4f4f4f;"></div>
<div style="left:898.3px;top:71.3px;width:29px;height:17.7px;background:#5a5a5a;border-radius:3px"></div>
<div style="left:929.4px;top:71.3px;width:30.8px;height:17.7px;background:#5a5a5a;border-radius:3px"></div>
<div class="t" style="left:932px;top:74.61px;font-size:9.3px;color:#d8d8d8;">通常</div>
<div style="left:964.8px;top:75px;width:27px;height:6.6px;background:#eeeeee;background-image:linear-gradient(45deg,#cfcfcf 25%,transparent 25%,transparent 75%,#cfcfcf 75%),linear-gradient(45deg,#cfcfcf 25%,transparent 25%,transparent 75%,#cfcfcf 75%);background-size:8px 8px;background-position:0 0,4px 4px"></div>
<div style="left:992.2px;top:71.3px;width:2.4px;height:15.3px;background:#777777;border-radius:1px"></div>
<div class="t" style="left:999px;top:73.92px;font-size:9px;color:#e0e0e0;letter-spacing:-0.3px">100</div>
<div style="left:998px;top:90px;width:26px;height:17.4px;background:#545454;"></div>
<svg style="left:0;top:0" width="1024" height="768" viewBox="0 0 1024 768">
<path d="M959.5,343 L962,344" stroke="#4d7aab" stroke-width="1.2"/>
<path d="M960.7,369.5 L958.8,374 L962.6,374 Z" fill="#4d7aab"/>
<path d="M956,493 L958,497 M961,493 L963,497" stroke="#e8b0c0" stroke-width="0.8"/>
<path d="M957,590 L961,590" stroke="#e0d060" stroke-width="1"/>
<path d="M945.5,743 L947.5,751 L949.5,743" stroke="#222" stroke-width="1.1" fill="none"/>
<path d="M957,436 L962,438" stroke="#777" stroke-width="0.6"/>
</svg>
<svg style="left:0;top:0" width="1024" height="768" viewBox="0 0 1024 768">
<defs><filter id="bl" x="-20%" y="-100%" width="140%" height="300%"><feGaussianBlur stdDeviation="1.6"/></filter></defs>
<g fill="none" stroke="#c6c6c6" stroke-width="1.2" stroke-linecap="round" stroke-linejoin="round">
<path d="M5,40.5 L2,43.5 L5,46.5 M8,40.5 L5,43.5 L8,46.5" stroke="#9a9a9a" stroke-width="0.95"/>
<path d="M38,40.5 L35,43.5 L38,46.5 M41,40.5 L38,43.5 L41,46.5" stroke="#9a9a9a" stroke-width="0.95"/>
<path d="M61.5,40.5 L58.5,43.5 L61.5,46.5" stroke="#9a9a9a" stroke-width="0.95"/>
<rect x="25.8" y="39" width="4.2" height="9" fill="#5e5e5e" stroke="none"/><rect x="27.5" y="39" width="0.9" height="9" fill="#444" stroke="none"/>
<rect x="185" y="39" width="4.2" height="9" fill="#5e5e5e" stroke="none"/><rect x="186.7" y="39" width="0.9" height="9" fill="#444" stroke="none"/>
<path d="M891,41 L888,43.7 L891,46.5 M894.3,41 L891.3,43.7 L894.3,46.5" stroke="#9a9a9a" stroke-width="0.95"/>
<rect x="898.8" y="40" width="4.6" height="8" fill="#5e5e5e" stroke="none"/><rect x="900.6" y="40" width="0.9" height="8" fill="#444" stroke="none"/>
<path d="M996,41 L999,43.7 L996,46.5" stroke="#9a9a9a" stroke-width="0.95"/>
<path d="M1015.5,41 L1018.5,43.7 L1015.5,46.5 M1018.8,41 L1021.8,43.7 L1018.8,46.5" stroke="#9a9a9a" stroke-width="0.95"/>
<path d="M7,58 H12 M7,60.5 H12 M7,63 H12" stroke="#9a9a9a" stroke-width="0.9"/>
<path d="M72,58 H77 M72,60.5 H77 M72,63 H77" stroke="#9a9a9a" stroke-width="0.9"/>
<path d="M72,397.5 H77 M72,400 H77 M72,402.5 H77" stroke="#9a9a9a" stroke-width="0.9"/>
<path d="M903,58 H908.5 M903,60.5 H908.5 M903,63 H908.5" stroke="#9a9a9a" stroke-width="0.9"/>
<path d="M24.5,68 L32,59.5 L33.5,61 L26,69.5 Z" fill="#c0c0c0" stroke="none"/><path d="M24.5,68 L23,70.5 L26,69.5 Z" fill="#c0c0c0" stroke="none"/>
<path d="M89,69 L97,59 L99,61 L91,69 Z" fill="#c0c0c0" stroke="none"/>
<rect x="94" y="63" width="6" height="6" stroke="#c0c0c0" stroke-width="1"/>
<path d="M89,406 L97,397 L99,399 L91,406 Z" fill="#c0c0c0" stroke="none"/>
<circle cx="97" cy="404" r="2.2" stroke="#c0c0c0" stroke-width="1"/>
<path d="M176,403 L186,397 L186,403 Z" fill="#888" stroke="none"/>

<circle cx="14.5" cy="83" r="4.8"/><path d="M18,86.5 L22,90.5" stroke-width="1.6"/>
<path d="M11,113 C11,108 12,107 13,107 L13,112 L14,106 C14.5,104.5 15.8,104.5 16,106 L16,112 L17,106.5 C17.5,105 19,105 19,106.5 L19,112 L20,108 C20.5,107 22,107 21.5,109 C21,113 20,118 16,119 C13,119.5 11,117 11,113 Z" fill="#c6c6c6" stroke="none"/>
<path d="M9,137 L14,134 L19,137 V143 L14,146 L9,143 Z M9,137 L14,140 L19,137 M14,140 V146" stroke-width="1"/>
<path d="M17,142 L17,150 L19,148 L21.5,152 L23,151 L20.5,147 L23.5,146.5 Z" fill="#c6c6c6" stroke="none"/>
<path d="M16,159 V174 M8.5,166.5 H23.5" stroke-width="1.3"/>
<path d="M13,161 L16,158 L19,161 Z M13,172 L16,175 L19,172 Z M11,163.5 L8,166.5 L11,169.5 Z M21,163.5 L24,166.5 L21,169.5 Z" fill="#c6c6c6"/>
<ellipse cx="17.5" cy="190" rx="7" ry="5.5"/><path d="M12,194 C10,197 10,199 13,199 C15,199 15,197 13,196"/>
<path d="M8,229 L17,220" stroke-width="1.4"/><path d="M19,213 L20,218 L25,219 L20,220.5 L19,225 L18,220.5 L13,219 L18,218 Z" fill="#c6c6c6" stroke="none"/>
<path d="M8.5,254.5 L10,250 L17,243 L20,246 L13,253 Z" stroke-width="1.1"/><path d="M16,242 L21,247 M19,240.5 C21,238.5 24,241.5 22,243.5 L20.5,245" stroke-width="1.6"/>
<path d="M4,265.6 H30" stroke="#555" stroke-width="1"/>
<path d="M9,289 L12,279 L19,273 L24,278 L18,285 Z M9,289 L14,283" stroke-width="1.2"/>
<path d="M9,316 L12,306 L19,300 L24,305 L18,312 Z M9,316 L13,310" stroke-width="1.2"/><path d="M12,306 L19,300 L24,305 L18,312 Z" fill="#c6c6c6"/>
<path d="M9,354 L23,352 M9,357 L23,355" stroke-width="0.9"/>
<path d="M13,363 H22 V369 H13 Z" fill="#c6c6c6"/><path d="M15,361 H20 V358 H15 Z" fill="#c6c6c6"/>
<path d="M9,383 H23 M9,386 H23 M9,389 H23 M9,392 H23" stroke-width="1"/>
<path d="M10,419 L17,410 L23,415 L16,423 Z" fill="#e4e4e4" stroke="none"/><path d="M9,420 L12,424 H20" stroke="#e4e4e4" stroke-width="1.1"/>
<path d="M9,448 C8,443 10,440 12,436 C14,440 16,442 16,445 C17,441 19,439 20,436 C22,440 24,443 23,448 C22,451 18,451 16,449 C14,451 10,451 9,448 Z" fill="#c6c6c6" stroke="none"/>
<rect x="9" y="463" width="14" height="14" rx="3"/><path d="M9,468 H23 M9,473 H23 M14,463 V477 M19,463 V477" stroke-width="0.9"/>
<path d="M4,488.5 H30" stroke="#555" stroke-width="1"/>
<path d="M8,503 L15,497 L23,503 L15,509 Z" fill="#dcdcdc" stroke="none"/><path d="M23,503 C24,506 23.5,509 22,509" stroke="#dcdcdc"/>
<rect x="9" y="523" width="14" height="14" fill="#9a9a9a" stroke="#cfcfcf" stroke-width="1"/><path d="M10,524 L22,536 V524 Z" fill="#e0e0e0" stroke="none"/>
<circle cx="16" cy="557.5" r="7"/>
<rect x="9" y="578" width="14" height="14" rx="1.5"/><path d="M9,583 H23 M14,583 L12,592 M14,587 H23"/>
<path d="M10,604 H22 L10,618 Z" stroke-width="1.8"/>
<path d="M9.5,644 L16,632 L22.5,644 M11.5,640 H20.5" stroke-width="1.8"/>
<ellipse cx="16" cy="664.5" rx="7" ry="4.5"/><path d="M13,668.5 L11,672 L16,669"/>
<path d="M11,687 V698 M11,687 H22" stroke-width="1.2"/><rect x="9" y="686" width="3" height="3" fill="#c6c6c6" stroke="none"/><path d="M14,689 L21,693 L18,694 L20,697 L14,689" fill="#c6c6c6"/>

<circle cx="49.5" cy="66.5" r="6"/><path d="M47,64 L53,70 M47,64 H50 M47,64 V67" stroke-width="1.1"/>
<path d="M43,96 L49,90 L55,96 L49,102 Z" fill="#c6c6c6" stroke="none"/><path d="M43,97 L47,101 L51,101" stroke="#c6c6c6"/>
<path d="M51,96 H58 M51,99 H58 M51,102 H58 M58,95 V103" stroke-width="0.9"/>
<path d="M43,121 L49,115 L55,121 L49,127 Z" fill="#c6c6c6" stroke="none"/><path d="M43,122 L47,126 L51,126"/>
<circle cx="55" cy="127" r="2.8" stroke-width="1.2"/>
<path d="M43,146 L49,140 L55,146 L49,152 Z" fill="#8a8a8a" stroke="none"/><path d="M43,147 L47,151 L51,151" stroke="#8a8a8a"/>
<circle cx="54" cy="152" r="3" stroke="#8a8a8a" stroke-width="1"/><circle cx="54" cy="152" r="1.3" stroke="#8a8a8a" stroke-width="0.8"/>
<g stroke="#8a8a8a" stroke-width="1">
<rect x="43.5" y="175" width="12" height="12" rx="2"/><path d="M43.5,179 H55.5 M43.5,183 H55.5 M47.5,175 V187 M51.5,175 V187"/>
<rect x="43.5" y="200" width="12" height="12" rx="2"/><path d="M46.5,200 V212 M52.5,200 V212"/>
<path d="M44,226 H55 M44,229.5 H55 M44,233 H55 M44,236.5 H55"/>
<path d="M44,259 L50,256 L56,259 L50,262 Z M44,262.5 L50,265.5 L53,264 M44,266 L50,269 L52,268"/><circle cx="55" cy="266" r="1.2"/>
<rect x="43" y="290" width="13" height="10"/><path d="M43,290 L45,288 H49 L50,290 M45,291 L54,299 M54,291 L45,299" stroke-width="1.2"/>
<rect x="43" y="321" width="13" height="10"/><path d="M43,321 L45,319 H49 L50,321 M45,322 L54,330 M54,322 L45,330" stroke-width="1.2"/>
<rect x="43" y="353" width="13" height="10"/><path d="M43,353 L45,351 H49 L50,353 M49.5,355 V360 M47,358 L49.5,361 L52,358 M46,362 H53"/>
</g>

<path d="M71,79 L76,74 L82,80 L77,85 Z" fill="#c8c8c8" stroke="none"/><path d="M70,80 L75,86 H82" stroke="#c8c8c8" stroke-width="1"/>
<circle cx="88" cy="330.5" r="4.2" fill="#d8d8d8" stroke="none"/><path d="M85.5,330.5 H90.5 M88,328 V333" stroke="#3e3e3e" stroke-width="1.2"/>
<rect x="135.5" y="374" width="9" height="9" rx="1" stroke-width="1"/><path d="M140,375 V380 M138,378 L140,380 L142,378" stroke-width="1"/>
<rect x="157" y="376" width="8" height="8" rx="1" stroke-width="1"/><path d="M155,382 V374 H163" stroke-width="1"/><path d="M161,378 V382 M159,380 H163" stroke-width="1"/>
<path d="M176,375 H184 M178,375 V384 H182 V375 M179.5,377 V382 M180.5,377 V382" stroke-width="1"/>
<path d="M175.5,429 V426 C175.5,423 179,423 179,426" stroke-width="1"/><rect x="176" y="428" width="6" height="5" fill="#c6c6c6" stroke="none"/>
<circle cx="159" cy="758" r="5" stroke-width="1"/><path d="M159,755 V758.5" stroke-width="1"/>
<path d="M176,764 L181,759 M180,757 C180,754 184,753 186,755 L183.5,757.5 L184.5,758.5 L187,756 C188,759 185,762 182,761" stroke-width="1.1"/>
<path d="M177,445 V451 M175,449 L177,451.5 L179,449 M174.5,454 H179.5" stroke-width="1"/>
<path d="M163,447 L165.5,444.5 L168,447 M163,452 L165.5,454.5 L168,452" stroke-width="0.9"/>
<circle cx="124" cy="477" r="5" fill="#cfcfcf" stroke="none"/>
<circle cx="138" cy="477" r="5.2" fill="#d8d8d8" stroke="none"/>
<circle cx="153" cy="477" r="5" fill="#b5b5b5" stroke="none"/>
<circle cx="167" cy="477" r="5" fill="#888" stroke="none"/><circle cx="167" cy="477" r="3.2" fill="#bbb" stroke="none"/>
<path d="M177,472.5 L179.5,470 L182,472.5 M177,481.5 L179.5,484 L182,481.5" stroke-width="0.9"/>
<path d="M176.5,500 L179,503.5 L176.5,507" stroke-width="1"/>
<path d="M163,526 L165.5,523.5 L168,526 M163,531 L165.5,533.5 L168,531" stroke-width="0.9"/>
<circle cx="178" cy="529.5" r="3.3" stroke-width="1"/><path d="M176,532 L180,527" stroke-width="1"/>
<path d="M81,553 L83,556 L87,550" stroke="#777" stroke-width="1"/>
<path d="M137,556 H147 M142,551 V561 M151,556 H161 M156,551 V561 M165,556 H175" stroke="#6a6a6a" stroke-width="2"/>
<path d="M178,552 L180.5,549.5 L183,552 M178,560 L180.5,562.5 L183,560" stroke="#888" stroke-width="0.9"/>
<path d="M163,577 L165.5,574.5 L168,577 M163,582 L165.5,584.5 L168,582" stroke-width="0.9"/>
<path d="M79,432 C90,419 108,411 129,411.5 L129,418 C110,417 95,422 79,432 Z" fill="#3a3a3a" stroke="none"/>

<path d="M202,44.5 H213 M202,48.5 H213 M202,52.5 H213" stroke="#d0d0d0" stroke-width="1.6"/>
<rect x="230" y="42" width="12" height="12" stroke="#d8d8d8" stroke-width="1"/><path d="M233,52 L243,40 L246,42 L236,53 Z" fill="#d8d8d8" stroke="#6b7390" stroke-width="0.6"/>
<path d="M257,44 L260.5,40.5 L264,44 M257,52 L260.5,55.5 L264,52" stroke="#c8c8c8" stroke-width="1.1"/>
<rect x="276" y="41" width="14" height="14" rx="2" stroke-width="1"/><path d="M283,44.5 C279,44.5 278.5,49 280.5,50.5 C283,52.5 287,51 287,48 C287,46 284,45.5 283,47.5 C282.5,49 284,49.5 284.5,48.5" stroke-width="1"/><circle cx="289" cy="42" r="2" fill="#d03050" stroke="none"/>
<path d="M314,41 H322 L325,44 V54 H314 Z" stroke-width="1.1"/><circle cx="323" cy="53" r="3.3" fill="#4a4a4a" stroke-width="1"/><path d="M321,53 H325 M323,51 V55" stroke-width="0.9"/>
<path d="M341,44 H346 L347.5,45.5 H354 V54 H341 Z" fill="#c8c8c8" stroke="none"/><path d="M349,44 Q353,41 356,43 M354,41.5 L356,43 L354,44.5" stroke-width="0.9"/>
<path d="M371,52 V55 H385 V52 M373,52 L375,46 H381 L383,52" stroke-width="1.1"/><path d="M371,52 H385 V55 H371 Z" fill="#c8c8c8"/><path d="M378,40 V47 M376,45 L378,47.5 L380,45" stroke-width="1.1"/>
<path d="M397,44 L400.5,40.5 L404,44 M397,52 L400.5,55.5 L404,52" stroke="#c8c8c8" stroke-width="1.1"/>
<path d="M425,45 H432 C436,45 437,48 437,50 C437,53 434,54 431,54 H427 M428,42 L425,45 L428,48" stroke-width="1.2"/>
<path d="M466,45 H459 C455,45 454,48 454,50 C454,53 457,54 460,54 H464 M463,42 L466,45 L463,48" stroke-width="1.2"/>
<g stroke-width="1.3"><path d="M495.5,41 V43.5 M495.5,52.5 V55 M488.5,48 H491 M500,48 H502.5 M490.5,43 L492.3,44.8 M498.7,51.2 L500.5,53 M490.5,53 L492.3,51.2 M498.7,44.8 L500.5,43"/></g>
<rect x="519.5" y="42.5" width="11" height="11" stroke="#6e6e6e" stroke-dasharray="1.5 1" stroke-width="1"/><rect x="521.5" y="44.5" width="9" height="9" fill="#606060" stroke="none"/>
<path d="M548,48 L554,42 L561,49 L555,55 Z" fill="#d8d8d8" stroke="none"/><path d="M548,48 H561" stroke="#4a4a4a" stroke-width="1"/><path d="M561,50 C563,53 562,55 561,55" stroke="#d8d8d8" stroke-width="1.4"/>
<rect x="579" y="43" width="11" height="11" stroke-width="1"/><path d="M584.5,40 V43 M584.5,54 V57" stroke-width="1"/><g fill="#c8c8c8" stroke="none"><rect x="578" y="42" width="2" height="2"/><rect x="589" y="42" width="2" height="2"/><rect x="578" y="53" width="2" height="2"/><rect x="589" y="53" width="2" height="2"/></g>
<g stroke="#6a6a6a" stroke-width="1"><rect x="615.5" y="42" width="12" height="12" stroke-dasharray="1.5 1"/><path d="M615.5,42 L627.5,54"/>
<rect x="645.5" y="42" width="12" height="12" stroke-dasharray="1.5 1"/><path d="M657.5,42 V54 H645.5 Z" fill="#6a6a6a"/>
<rect x="676" y="42" width="12" height="12" rx="1.5"/><rect x="678" y="44" width="8" height="8" stroke-dasharray="1.5 1"/></g>
<path d="M712,42 V55 H725 M712,42 L724,54" stroke-width="1.1"/><path d="M718,48 L725,41" stroke-width="2"/>
<path d="M741,48 H755 C755,53 752,56 748,56 C744,56 741,53 741,48 Z" stroke="#e0e0e0" stroke-width="1.1"/><path d="M747,49 L756,40" stroke="#e0e0e0" stroke-width="2"/>
<path d="M771,53 H785 M773,49 V56 M779,49 V56" stroke-width="1"/><path d="M775,50 L785,41" stroke-width="2"/>
<rect x="809" y="41" width="10" height="15" rx="1.5" stroke-width="1.1"/><g fill="#c8c8c8" stroke="none"><rect x="811" y="43" width="1.5" height="1.5"/><rect x="813.5" y="43" width="1.5" height="1.5"/><rect x="816" y="43" width="1.5" height="1.5"/><rect x="811" y="45.5" width="1.5" height="1.5"/><rect x="813.5" y="45.5" width="1.5" height="1.5"/><rect x="811" y="48" width="1.5" height="1.5"/><rect x="809" y="52" width="10" height="4"/></g>
<path d="M850,42 C854,42 857,45 857,48.5 C857,52 854,55 850,55 C848,55 846.5,54.5 845,54 L843,56 L843.5,52.5 C843,51.5 843,50 843,48.5 C843,45 846,42 850,42 Z" stroke-width="1.1"/>
<path d="M848,46.5 C848,44 852,44 852,46.5 C852,48 850,48.5 850,50" stroke-width="1"/><circle cx="850" cy="52" r="0.6" fill="#c8c8c8"/>
<path d="M866,64 L870,68 L874,64" stroke="#d0d0d0" stroke-width="1.2"/>

<path d="M921,67 V63 C921,58 930,58 930,63 V67" stroke="#888" stroke-width="1.2"/><rect x="923.5" y="62" width="4" height="5" fill="#888" stroke="none"/>
<path d="M942,62 L947.5,59 L953,62 L947.5,65 Z M942,65 L947.5,68 L953,65 M942,68 L947.5,71 L953,68" stroke="#c8c8c8" stroke-width="1"/>
<rect x="901.5" y="75" width="11" height="9" rx="2" stroke-width="1"/>
<path d="M917,78 L920,75 L923,78 M917,82 L920,85 L923,82" stroke-width="0.9"/>
<path d="M950,78 L953,75 L956,78 M950,82 L953,85 L956,82" stroke-width="0.9"/>
<path d="M1015,78 L1018,75 L1021,78 M1015,82 L1018,85 L1021,82" stroke-width="0.9"/>
<rect x="920" y="95.5" width="7" height="7" fill="#b8b8b8" stroke="none"/><rect x="922.5" y="93" width="7" height="7" stroke="#b8b8b8" stroke-dasharray="1 1" stroke-width="0.9"/>
<path d="M945.5,94 V96 M941,96 H950 M944,97 L942,104 H949 L947,97" fill="#c8c8c8" stroke="#c8c8c8" stroke-width="0.9"/>
<path d="M963,98 V96 C963,92.5 969,92.5 969,96 V98" stroke-width="1"/><rect x="962" y="98" width="8" height="6" fill="#c8c8c8" stroke="none"/>
<g fill="#b8b8b8" stroke="none"><rect x="985" y="93" width="2.5" height="2.5"/><rect x="990" y="93" width="2.5" height="2.5"/><rect x="987.5" y="95.5" width="2.5" height="2.5"/><rect x="985" y="98" width="2.5" height="2.5"/><rect x="990" y="98" width="2.5" height="2.5"/><rect x="982" y="100" width="5" height="4"/></g>
<rect x="1001" y="94" width="6" height="9" rx="2" fill="#777" stroke="none"/><path d="M1008,97 L1011,94 L1014,97 M1008,101 L1011,104 L1014,101 M1003,101 L1008,104" stroke="#777" stroke-width="0.9"/>
<path d="M903,115 H911 C913,115 913,117 913,119 V123 H906 C904,123 903,122 903,120 Z" stroke-width="1"/><circle cx="912" cy="123" r="2.3" stroke-width="0.9"/><path d="M910.5,123 H913.5" stroke-width="0.8"/>
<path d="M923.5,116 H928 L929,117.5 H934 V123 H923.5 Z" fill="#c8c8c8" stroke="none"/><circle cx="933" cy="123.5" r="2.3" fill="#4f4f4f" stroke="#c8c8c8" stroke-width="0.9"/>
<rect x="947" y="114.5" width="8" height="8" rx="1.5" stroke-width="0.9"/><rect x="943.5" y="119" width="7" height="6.5" rx="1" stroke-width="0.9"/><circle cx="951" cy="118.5" r="1.3" fill="#c8c8c8" stroke="none"/>
<rect x="968" y="114.5" width="8" height="8" rx="1.5" stroke-width="0.9"/><rect x="964.5" y="119" width="7" height="6.5" rx="1" stroke-width="0.9"/>
<rect x="986.5" y="114.5" width="10.5" height="10.5" rx="2" fill="#d4d4d4" stroke="none"/><circle cx="991.7" cy="119.7" r="2.8" fill="#4f4f4f" stroke="none"/>
<path d="M1008,116 H1017 M1009,116 V125 H1016 V116 M1011.5,118 V123 M1013.5,118 V123" stroke-width="0.9"/>
</g>
<path d="M77,105 C88,97 96,95 103.5,95.3 C112,95.5 116,100 122.3,101.7 C135,104 145,100 151.5,97.6 C145,103 135,108 124.6,107.6 C115,107 110,101 103.5,101 C95,101 88,102 77,105 Z" fill="#ffffff"/>
<path d="M78,130 C88,126 95,124 101.2,124 C112,124.5 118,132 127,132.2 C137,132.4 144,129 149.2,126.3" fill="none" stroke="#e8e8e8" stroke-width="5" opacity="0.9" filter="url(#bl)" stroke-linecap="round"/>
<path d="M80,158 C90,153 96,151.5 101.2,151.5 C112,152 118,159 127,159.1 C137,159 143,156 148,153.9" fill="none" stroke="#bbbbbb" stroke-width="2" opacity="0.7"/>
<path d="M86,156.5 C92,153 97,151.5 101.2,151.5 C112,152 118,159 127,159.1 C135,159 140,157 144,155" fill="none" stroke="#e4e4e4" stroke-width="5.5" stroke-dasharray="0.7 0.5" stroke-linecap="round"/><path d="M90,155 C95,152.5 98,152 101.2,152 C112,152.5 118,158.5 127,158.6 C133,158.5 137,157.5 140,156" fill="none" stroke="#f0f0f0" stroke-width="3"/>
<g fill="none" stroke="#ffffff" stroke-linecap="round">
<path d="M75.5,187 C85,181 92,178 98,178.5 C110,179 117,186 127.6,186 C138,186 146,182 152.5,178" stroke-width="5"/>
<path d="M75.5,213.5 C85,208 92,205.5 98,205.8 C110,206 117,213 127.6,213 C138,213 146,209 152.5,204.5" stroke-width="3"/>
<path d="M75,240 C85,234 92,231.5 98,231.6 C110,232 117,240 127.6,240 C138,240 146,236 153,231.6" stroke-width="8"/>
</g>
<path d="M77.5,267.4 C88,261 95,259.5 100.4,259.5 C112,260 118,266.7 126.2,266.7 C137,266.5 146,262 152,259.5 C146,264 137,270 126.2,270 C116,270 110,263 100.4,262.5 C93,262.5 86,264 77.5,267.4 Z" fill="#ffffff"/>
<path d="M70,298 L76,286 L82,296 Z" fill="#e06080"/><path d="M74,297 L80,290 L84,297 Z" fill="#ffffff"/><rect x="70" y="297" width="3" height="2" fill="#e8d040"/>
</svg>

<svg style="left:0;top:0" width="1024" height="768" viewBox="0 0 1024 768">
<defs>
<clipPath id="cv"><rect x="198.75" y="74.7" width="494.3" height="692.3"/></clipPath>
<linearGradient id="iris" x1="0" y1="0" x2="0" y2="1">
<stop offset="0" stop-color="#1b2ab4"/><stop offset="0.4" stop-color="#2c3cc4"/><stop offset="0.65" stop-color="#8e7ada"/><stop offset="1" stop-color="#eab4f4"/>
</linearGradient>
<linearGradient id="ear" x1="0" y1="0" x2="0" y2="1"><stop offset="0" stop-color="#5aa0e0"/><stop offset="1" stop-color="#c070e0"/></linearGradient>
</defs>
<g clip-path="url(#cv)">
<!-- ======== big eye ======== -->
<path d="M272,167 C283,158 303,157 317,163 C319,178 319,196 312,208 C304,214 286,215 279,209 C272,198 270,182 272,167 Z" fill="url(#iris)"/>
<path d="M282,176 C282,196 290,204 298,203 C306,202 310,190 309,178 C300,185 290,185 282,176 Z" fill="#5a3ab8" opacity="0.55"/>
<path d="M280,188 C281,200 286,207 292,209 M309,190 C308,200 304,205 299,208" fill="none" stroke="#f4e4ff" stroke-width="1" opacity="0.9"/>
<path d="M303,196 L311,199 M304,200 L310,204" stroke="#f4e4ff" stroke-width="0.8" opacity="0.8"/>
<ellipse cx="309" cy="171" rx="6.5" ry="4.5" fill="#63a6d8" transform="rotate(-20 309 171)"/>
<circle cx="295.5" cy="175.5" r="1.1" fill="#a8d0f0"/><circle cx="299" cy="175" r="1.5" fill="#a8d0f0"/>
<path d="M272,168 C270,182 272,198 279,209" fill="none" stroke="#111" stroke-width="1.3"/>
<path d="M317,163 C320,178 319,196 314,208" fill="none" stroke="#111" stroke-width="0.9"/>
<path d="M246,189 C250,176 262,163 285,156 C305,151 330,156 355,178 C338,172 322,167 300,164 C283,163 270,167 262,173 C255,178 250,184 246,189 Z" fill="#111"/>
<path d="M249,186 C254,172 262,166 270,163" fill="none" stroke="#111" stroke-width="2"/>
<path d="M253,159 C270,150 292,146 312,149 C328,152 340,160 347,171" fill="none" stroke="#111" stroke-width="1.1"/>
<path d="M285,155 L296,143" stroke="#111" stroke-width="2.2" fill="none"/>
<path d="M314,160 C323,158 330,154 333,150" stroke="#111" stroke-width="2.4" fill="none"/>
<path d="M326,168 C325,178 323,186 320,192" stroke="#111" stroke-width="2.6" fill="none"/>
<path d="M273,210.5 C290,213 306,213 320,209 C325,205 329,202 333,199" fill="none" stroke="#111" stroke-width="1.8"/>
<path d="M294,216 C305,214 315,210 324,204 M312,206 L331,197 M315,210 L332,205" fill="none" stroke="#111" stroke-width="1"/>
<!-- ======== handwriting ======== -->
<g fill="none" stroke="#111" stroke-width="2" stroke-linecap="round" stroke-linejoin="round">
<path d="M611.7,79.4 L613.4,86.3 M603.5,89 L619.9,88.3"/>
<path d="M602.8,108.8 L602.6,103 C602.8,100.5 604,99.9 606,99.8 L618.5,99.3 C619,103 619.2,106 619.2,108.8"/>
<path d="M607,98.6 C610,96 613,94.5 615.8,93.8 M608.3,108.8 L609.5,103.5 L615,102.8 L614.5,108 L608.3,108.8"/>
<path d="M628.1,81.5 C626,87 625,93 624.7,99.2 L626,101 M628.8,82.8 L631.5,98.6 M625.8,89.7 L631,89.5 M625.3,93.8 L631,93.6 M622.7,101.3 C628,98 633,93 637,89.7 M637.7,88.3 C634,95 631,100 628.1,105.4"/>
<path d="M643.2,82.8 L652,82.5 M642.5,88 L650,88.3 M641.1,93.1 L650.7,93.1 M640,87 C639.6,93 640,99 640.6,103.2 C645,103 650,102.5 654.1,102"/>
<path d="M658.2,104 L659.6,105.4"/>
</g>
<!-- ======== fills ======== -->
<!-- hair back -->
<path d="M463,107 C438,107 423,126 420,160 C417,195 418,222 421,232 L430,240 L433,256 L446,258 L452,222 L476,210 L490,218 L512,222 L520,227 C513,205 510,180 509,158 C506,128 490,107 463,107 Z" fill="#f5e09e"/>
<!-- skin: neck, shoulders, chest -->
<path d="M450,200 L476,198 L478,214 C495,220 515,222 525,228 C535,236 541,246 545,256 L552,265 L552,290 L500,300 L440,296 L418,302 L402,300 C400,280 404,262 413,240 L421,232 L437,224 L452,218 Z" fill="#fbeee2"/>
<!-- midriff -->
<path d="M440,292 L500,298 L536,282 L540,290 L503,322 C480,316 458,302 440,292 Z" fill="#fbeee2"/>
<path d="M500,331 L514,358 L503,367 Z" fill="#fbeee2"/>
<!-- left arm -->
<path d="M389,306 C383,315 378,322 374,327 C366,338 362,345 357,354 C352,364 347,374 343.7,380 C341,383 340,384 339.4,385 C333,390 329,395 326.5,397.9 C324,400 322,402 321.5,403.6 L312.5,424.7 C317,421 321,418 324.3,415.8 L322.2,429.4 C326,426 328,423 330,420 L330.8,424.7 C333,420 335,414 336.5,410 L342.2,416.5 C344,417 345,416.5 346.5,415.8 C349,410 352,405 353.7,401.5 C354.5,396 355,392 355.1,388.6 C358,385 360,383 362.3,380 C364,376 365,374 366.8,371.3 C372,363 376,358 381.7,354 C390,344 396,338 399,331.7 C402,322 404,312 406.4,305.7 Z" fill="#fbeee2"/>
<!-- right arm -->
<path d="M561,272 C570,280 578,285 584,290 C596,297 606,303 615.4,308.5 C624,316 630,322 636,329.4 C642,334 648,337 652,339.8 C660,346 668,353 671.4,359.3 C664,360 656,358 650,355 C645,356 640,354 634,350 C633.6,355 634,360 633.6,364.5 C631,366 629,366 629.7,365.8 C628,361 628,359 628.4,358 C626,350 624,342 620.6,337 C616,333 613,331 610,329.4 C596,321 582,314 571,308.5 C562,303 555,300 550,297 Z" fill="#fbeee2"/>
<!-- face -->
<path d="M439,158 C439,180 446,196 464,206 C477,200 485,186 488,160 C478,152 450,152 439,158 Z" fill="#fbeee2"/>
<!-- bangs -->
<path d="M441,122 C455,108 482,110 496,124 C506,140 506,160 501,182 L493,176 L487,163 C484,152 480,142 478,150 L472,169 L464,173 L457,161 L449,166 L440,174 C434,152 435,134 441,122 Z" fill="#f5e09e"/>
<path d="M455,119 C461,116 466,121 467,132 L465,166 C460,150 456,135 455,119 Z" fill="#fcf3d0"/>
<path d="M492,150 C497,160 498,172 494,182 L489,176 C492,168 492,158 492,150 Z" fill="#fcf3d0"/>
<!-- halter straps -->
<path d="M450,212 L459,212 L447,256 L437,256 Z" fill="#e6dc72"/>
<path d="M473,210 L482,210 L498,254 L489,255 Z" fill="#e6dc72"/>
<!-- left sleeve ruffle -->
<path d="M370.5,291 L394,276 L424,264.9 L428,300 Q424,304 419,302 Q414,307 408,304.5 Q403,309 397,306 Q391,310 386,306.5 Q380,309 375,304 Z" fill="#e6dc72"/>
<!-- main ruffle -->
<path d="M435,257 C455,254 480,252 500.8,251.5 C515,252 530,253 544.5,255 L553.7,264.3 L553.7,282.5 C540,287 530,289 522.7,290 C510,291 503,292 497,291.7 C488,296 483,301 482.5,301 C478,298 472,294 468,293.5 C455,293 446,292 440.6,291.7 Z" fill="#e6dc72"/>
<g fill="#ffffff">
<circle cx="470" cy="265" r="3.3"/><circle cx="486" cy="271" r="3.2"/><circle cx="456" cy="275" r="3.5"/><circle cx="498" cy="262" r="2.9"/><circle cx="508" cy="270" r="3.7"/><circle cx="523" cy="265" r="3.0"/><circle cx="534" cy="275" r="3.2"/><circle cx="475" cy="284" r="3.3"/><circle cx="546" cy="264" r="2.8"/><circle cx="392" cy="287" r="3.1"/><circle cx="407" cy="293" r="3.3"/><circle cx="381" cy="296" r="2.8"/><circle cx="415" cy="279" r="2.9"/><circle cx="451" cy="287" r="2.9"/><circle cx="496" cy="283" r="2.9"/><circle cx="517" cy="281" r="3.1"/><circle cx="541" cy="283" r="2.4"/><circle cx="462" cy="262" r="2.4"/><circle cx="528" cy="258" r="2.3"/>
<circle cx="444" cy="266" r="2.5"/><circle cx="480" cy="258" r="2"/><circle cx="538" cy="266" r="2.6"/><circle cx="462" cy="288" r="2.2"/><circle cx="400" cy="280" r="2.2"/><circle cx="376" cy="290" r="2"/></g>
<!-- overalls -->
<path d="M437,222 L447,223 C444,235 441,250 440,262 L440,292 C450,300 462,308 475,315 C488,320 495,322 500.8,322.7 L502.6,320.8 L524.5,311.7 L525,320 L505,326 C502,333 500,340 500,350 C500,362 500.5,372 501.5,381 L519.6,382.5 L524.8,388 C526,398 527,408 526.7,417 C522,425 515,432 511,434.8 C495,433 485,433 478,432.8 C460,433 445,434 429,434.8 C415,433 408,431 401.7,429 C398,425 397.8,420 397.8,417 C398,410 399,405 399,398.5 C402,390 403,386 403.7,382 C407,372 408,368 409,363.9 C414,352 417,348 419.3,348.8 C421,335 421,325 422.4,313.5 C421,300 420,290 421,280 C424,270 427,262 429,250 C432,238 435,228 437,222 Z" fill="#4d7aab"/>
<path d="M497,316 C505,308 515,300 522,294 C528,289 534,285 540,281 L545,289 C538,295 532,300 526,305 C518,312 512,318 505,323 Z" fill="#4d7aab"/>
<!-- legs -->
<path d="M408.7,431.8 C410,450 412,465 413.2,470.6 C417,485 420,495 422.4,502.5 C421,515 420,530 420,539 C421,560 421,580 422.4,600 C426,610 428,618 430,623.2 C434,640 437,650 438.8,656.5 C441,670 444,680 445.4,689.7 L446.6,705.2 C446,715 445,722 445.4,727.4 C446,735 447,740 448.8,742.9 C451,745 454,746 456.5,746.2 C461,745 465,743 467.6,740.6 C470,737 472,733 473.1,729.6 C472,722 471,718 469.8,714 C467,705 466,698 464.3,692 C462,680 461,670 459.8,663 C457,650 455,635 454.3,623.2 C453,610 453,605 453.1,600 C452,580 452,560 452,539 C453,520 454,505 455.4,493.4 C456,470 457,450 457.7,434 Z" fill="#fbeee2"/>
<path d="M470.2,434 C470,450 470,460 470.2,470.6 C469,480 468,490 468,500 C469,515 471,530 472.5,539 C477,550 482,562 486.2,571 C489,582 491,592 493,600 C498,612 502,625 505.3,634.3 C507,645 509,655 509.7,661 C503,665 500,670 499.7,674.2 C500,685 500,692 500.8,696.3 C503,699 505,700 507.5,700.8 C512,701 516,701 520.8,699.7 C523,696 525,692 526.3,687.5 C526,680 525.5,670 525.2,663.1 C525,655 526,650 526.3,645.4 C525,638 524,634 523,629.9 C522,615 521,605 521.5,600 C520,585 519,575 518,566.4 C514,555 511,545 509,539 C506,530 503,522 502.2,516.2 C505,500 507,490 509,482 C513,465 517,445 519.3,431.8 Z" fill="#fbeee2"/>
<path d="M468,468 C480,465 495,468 510,476 L510,494 C495,492 480,492 468,494 Z" fill="#ffffff"/>
<path d="M448,710 C455,708 462,707 469,707.4 L470,716 L468,722 L465,720 L462,725 L458,722 L455,726 L452,722 L449,725 Z" fill="#e6dc72"/>
<path d="M497,670 C502,666 505,664 508.6,663.1 C515,664 520,665 526,665.3 L527,672 L523,676 L519,673 L515,677 L511,674 L507,677 L503,674 L499,676 Z" fill="#e6dc72"/>
<path d="M501,362 C505,357 512,355 520,356 C526,358 528,364 526,370 C522,377 514,381 506,380 C501,376 500,368 501,362 Z" fill="#e6dc72"/>
<!-- earrings -->
<path d="M437,197 C434,202 434,207 437.5,208 C441,207 441,202 437,197 Z" fill="url(#ear)"/>
<path d="M490,190 C487,194 487,199 490.5,200 C494,199 494,194 490,190 Z" fill="url(#ear)"/>
<!-- eyes -->
<path d="M442,172 C445,171 451,171 453.5,172.5 C453.5,177 452,181 448,181.5 C444,181 442,177 442,172 Z" fill="#6a9ae0"/>
<path d="M443,176.5 C445,175.5 450,175.5 452.5,176.5 C452,180 450,181.5 448,181.5 C445.5,181.5 443.5,180 443,176.5 Z" fill="#b048d4"/>
<circle cx="446" cy="174.5" r="0.9" fill="#e8f0ff"/>
<path d="M470.5,170 C473,169 479,169 481.5,170 C481.5,175 480,179 476,179.5 C472,179 470.5,175 470.5,170 Z" fill="#6a9ae0"/>
<path d="M471,174.5 C473,173.5 479,173.5 481,174.5 C480.5,178 478.5,179.5 476,179.5 C473.5,179.5 471.5,178 471,174.5 Z" fill="#b048d4"/>
<circle cx="474" cy="172.5" r="0.9" fill="#e8f0ff"/>
<!-- ======== outlines ======== -->
<g fill="none" stroke="#1a1a1a" stroke-width="1.5" stroke-linecap="round" stroke-linejoin="round">
<!-- hair -->
<path d="M421,232 C418,210 417,190 420,160 C424,126 440,108 463,107 C490,107 506,128 509,158 C511,185 511,205 512,220" stroke-width="1.5"/>
<path d="M423,228 C420,200 419,175 423,150 M425,140 C430,122 445,112 458,110 M478,111 C492,116 503,130 506,150"/>
<path d="M430,240 C428,210 430,175 437,148 C445,128 458,118 470,117"/>
<path d="M505,220 C502,195 503,170 498,142 C492,126 480,118 468,117"/>
<path d="M437,130 C436,148 440,160 444,170 M447,121 C446,140 452,156 462,171 M458,116 C452,135 455,152 460,166 M476,120 C480,140 476,158 468,172 M486,124 C494,142 494,162 486,178 M498,138 C496,155 494,170 490,182 M500,150 C503,172 505,195 506,218 M433,160 C432,185 434,205 438,222 M494,180 C497,195 500,210 501,220 M441,165 C449,160 455,163 462,170"/>
<path d="M436,164 C446,158 456,161 464,168 M466,166 C476,160 486,161 494,166" stroke-width="1"/>
<path d="M440,174 C441,190 449,200 464,206 C476,200 483,190 487,176"/>
<path d="M438.5,172 C443,169.5 449,169 455,171 M469,169.5 C474,167 479,167 483.5,168.5" stroke-width="2.2"/><path d="M442,181.5 C446,182.5 450,182 453,180 M471,179.5 C475,180.5 479,180 482,177" stroke-width="0.7"/>
<path d="M462,184 L461.5,186" stroke-width="1"/>
<path d="M457,194 Q463,197 470,193" stroke-width="1"/>
<path d="M437,193 C430,200 430,209 437,211 C445,210 446,200 437,193 Z M490,186 C483,192 483,201 491,202.5 C498,201 499,192 490,186 Z" stroke="#8a94a4" stroke-width="1"/><path d="M436,191 L437,196 M489,184 L490,188" stroke="#333" stroke-width="1"/>
<!-- neck/shoulders -->
<path d="M451,207 L452,218 M475,206 L477,213"/>

<path d="M454,214 L441.5,255 M478.5,212 L492.5,254" stroke="#1a1a10" stroke-width="2.2"/><path d="M448,211.5 L457,212.5 M476,209.8 L484.5,209" stroke="#111" stroke-width="3"/>
<path d="M441,224 C430,230 421,232 413,240 C406,252 403,262 402,268" stroke-width="1.3"/>
<path d="M478,214 C495,220 515,222 525,228 C535,236 541,246 545,256"/>
<path d="M489,219 C505,221 520,224 530,233 M522,224 C534,232 540,244 546,255" stroke-width="0.8"/>
<path d="M463,246 L467,252 L471,246 M467,252 L466,256" stroke-width="1"/>
<!-- ruffles -->
<path d="M435,257 C455,254 480,252 500.8,251.5 C515,252 530,253 544.5,255 L553.7,264.3" stroke-width="1.5"/>
<path d="M436,260 C460,258 485,256 505,255 C525,256 540,257 550,262" stroke="#777" stroke-width="0.8"/>
<path d="M440.6,291.7 C446,292 455,293 468,293.5 C472,294 476,297 482,296 C488,293 492,292 497,291.7 C503,292 510,291 522.7,290 C530,289 540,287 553.7,282.5" stroke-width="1"/>
<path d="M458,263 L455,290 M472,262 L470,290 M488,260 L490,290 M506,258 L510,288 M524,260 L530,288 M540,262 L545,284 M515,258 L520,275 M497,262 L499,280" stroke="#333" stroke-width="0.9"/>
<path d="M485,294 L483,305 M490,294 L493,305" stroke-width="0.9"/>
<path d="M370.5,291 L394,276 L424,264.9" stroke-width="1.5"/>
<path d="M370.5,291 L375,304 Q380,309 386,306.5 Q391,310 397,306 Q403,309 408,304.5 Q414,307 419,302 Q424,304 428,300"/>
<path d="M385,282 L390,305 M398,276 L404,304 M410,272 L414,302 M378,290 L381,304" stroke="#333" stroke-width="0.9"/>
<path d="M420,296 L428,318 M424,300 L432,325" stroke-width="1.3"/>
<!-- sleeve band right -->
<path d="M551.8,264.3 L561.9,273.4 C558,285 550,295 539,300.8 C525,308 512,316 502.6,320.8" stroke-width="1.4"/>
<path d="M553.7,275 C545,290 525,300 497,311.7" stroke-width="1"/>
<!-- left arm -->
<path d="M389,308 C383,315 378,322 374,327 C366,338 362,345 357,354 C352,364 347,374 343.7,380 C341,383 340,384 339.4,385 C333,390 329,395 326.5,397.9 C324,400 322,402 321.5,403.6 L312.5,424.7 C317,421 321,418 324.3,415.8 C325,411 326,408 327.2,405.8 C333,402 338,399 342.2,397.2 M324.3,415.8 L322.2,429.4 C326,426 328,423 330,420 C332,413 335,407 337.9,402.2 M330,420 L330.8,424.7 C333,420 335,414 336.5,410" stroke-width="1.5"/>
<path d="M406.4,305.7 C404,312 402,322 399,331.7 C396,338 390,344 381.7,354 C376,358 372,363 366.8,371.3 C365,374 364,376 362.3,380 C360,383 358,385 355.1,388.6 C355,392 354.5,396 353.7,401.5 C352,405 349,410 346.5,415.8 C345,416.5 344,417 342.2,416.5 C342.3,411 342.5,405 342.9,397.2"/>

<path d="M362,345 L356,356 M336,392 L328,398" stroke-width="0.8"/>
<!-- right arm -->
<path d="M561.9,273.4 C570,280 578,285 584,290 C596,297 606,303 615.4,308.5 C624,316 630,322 636,329.4 C642,334 648,337 652,339.8 C660,346 668,353 671.4,359.3 C664,360 656,358 650,355 C645,356 640,354 634,350" stroke-width="1.5"/>
<path d="M550,297 C555,300 562,303 571,308.5 C582,314 596,321 610,329.4 C613,331 616,333 620.6,337 C624,342 626,350 628.4,358 C628,359 628,361 629.7,365.8 C631,366 633,366 633.6,364.5 C634,360 633.6,355 634,350"/>
<path d="M640,347 L652,356 M646,343 L662,354" stroke-width="0.8"/>
<!-- overalls outline -->
<path d="M447,223 C444,235 441,250 440,262 L440,292" stroke-width="1.3"/>
<path d="M437,222 C435,228 432,238 429,250 C427,262 424,270 421,280" stroke-width="1.3"/><path d="M428,262 C432,265 436,266 440,264" stroke-width="1.5"/>
<path d="M440,292 C450,300 462,308 475,315 C488,320 495,322 500.8,322.7" stroke-width="1.4"/>
<path d="M427,268 C425,285 424,300 425,320 C426,330 430,338 434,345" stroke-width="1.6"/>
<path d="M420.5,280.7 C420,290 421,300 422.4,313.5 C421,325 421,335 419.3,348.8 C417,352 414,358 409,363.9 C408,368 407,372 403.7,382 C403,386 402,390 399,398.5 C399,405 398,410 397.8,417 C397.8,420 398,425 401.7,429 C408,431 415,433 429,434.8 C445,434 460,433 478,432.8 C485,433 495,433 511,434.8 C515,432 522,425 526.7,417 C527,408 526,398 524.8,388" stroke-width="1.3"/>
<path d="M496.7,322 C493,333 489,345 486.3,355 M503,326 C499,336 495,346 492.5,355.4 M486,355 C490,357 495,357 500,352" stroke-width="1.5"/><path d="M501,333 C505,342 510,350 513,358 M500.5,350 C500,362 500.5,372 501.5,381" stroke-width="1.3"/>

<path d="M524.5,311.7 L525,320 L505,326" stroke-width="1"/>
<path d="M411.4,349 L430,356.4 C450,365 470,375 495.5,391.8 L519,386" stroke-width="1.5"/>
<path d="M409,363.9 C430,370 460,385 478,392 C486,396 492,398 495.5,399.6 L521,392" stroke-width="1.5"/>
<path d="M436,358 L432,372 L438,374 L442,361 Z" stroke-width="1.1"/>
<path d="M494,392 L496,400 M500,389 L502,399" stroke-width="1"/>
<path d="M410,410 C425,414 440,418 455,420 M475,428 C490,426 505,425 520,424 M430,328 C437,340 442,348 445,355" stroke-width="0.9"/>

<path d="M503,366 C510,362 518,361 526,364 M504,374 C512,371 518,370 524,371 M508,370 L514,378 M512,368 L518,377 M515,358 L524,354 L526,360" stroke-width="1"/><path d="M521,372 L536,386 L526,390 L519,378" stroke="#555" stroke-width="0.8"/>
<path d="M524,372 L532,384 L527,388 M392,392 L400,386 L398,378" stroke="#666" stroke-width="0.8"/>
<!-- legs -->
<path d="M408.7,431.8 C410,450 412,465 413.2,470.6 C417,485 420,495 422.4,502.5 C421,515 420,530 420,539 C421,560 421,580 422.4,600 C426,610 428,618 430,623.2 C434,640 437,650 438.8,656.5 C441,670 444,680 445.4,689.7 L446.6,705.2 C446,715 445,722 445.4,727.4 C446,735 447,740 448.8,742.9 C451,745 454,746 456.5,746.2 C461,745 465,743 467.6,740.6 C470,737 472,733 473.1,729.6 C472,722 471,718 469.8,714 C467,705 466,698 464.3,692 C462,680 461,670 459.8,663 C457,650 455,635 454.3,623.2 C453,610 453,605 453.1,600 C452,580 452,560 452,539 C453,520 454,505 455.4,493.4 C456,470 457,450 457.7,434" stroke-width="1.5"/>
<path d="M411,445 C413,465 416,480 420,495 M424,610 C428,630 434,650 440,670" stroke-width="0.8"/>
<path d="M470.2,434 C470,450 470,460 470.2,470.6 C469,480 468,490 468,500 C469,515 471,530 472.5,539 C477,550 482,562 486.2,571 C489,582 491,592 493,600 C498,612 502,625 505.3,634.3 C507,645 509,655 509.7,661 C503,665 500,670 499.7,674.2 C500,685 500,692 500.8,696.3 C503,699 505,700 507.5,700.8 C512,701 516,701 520.8,699.7 C523,696 525,692 526.3,687.5 C526,680 525.5,670 525.2,663.1 C525,655 526,650 526.3,645.4 C525,638 524,634 523,629.9 C522,615 521,605 521.5,600 C520,585 519,575 518,566.4 C514,555 511,545 509,539 C506,530 503,522 502.2,516.2 C505,500 507,490 509,482 C513,465 517,445 519.3,431.8" stroke-width="1.5"/>
<path d="M474,545 C480,560 488,580 496,600 M516,560 C520,580 522,600 523,625" stroke-width="0.8"/>
<path d="M410,445 C425,450 440,452 456,448 M440,448 L452,444" stroke-width="0.9"/>
<path d="M468,470 C480,464 498,466 510,478 L518,494 M466,478 C482,474 500,476 510,484 M466,490 C480,486 496,488 508,494 M510,478 L520,498 L518,502 M512,484 L524,500" stroke="#333" stroke-width="0.9"/>
<path d="M436,525 L440,530 M484,530 L490,532 L494,526" stroke="#555" stroke-width="0.7"/>
<path d="M430,619 C438,617 446,615 454,613 M430,622.5 C438,620.5 446,618.5 454,616.5" stroke="#333" stroke-width="0.9"/>
<path d="M431,626 C439,624 447,622 455,620 M431,629 C439,627 447,625 455,623" stroke="#333" stroke-width="0.9"/>
<path d="M434,634 C442,640 450,648 458,654 M434,638 C442,644 450,651 457,657 M436,650 C444,645 451,641 458,637 M437,654 C445,649 452,645 459,641" stroke="#333" stroke-width="0.9"/>
<path d="M440,663 C447,661 454,659 460,657 M441,667 C448,665 455,663 461,661 M442,672 L461,668" stroke="#333" stroke-width="0.9"/>
<path d="M430,623 C426,628 425,634 427,640 C429,636 431,630 432,626 M424,612 L428,640" stroke="#444" stroke-width="0.8"/>
<path d="M448.8,709.6 C455,708 462,707 468.7,707.4 M449.9,725 C455,725 462,724 468.7,725 M452,732 C458,730 464,730 470,734" stroke-width="1"/>
<path d="M498.6,669.8 C502,666 505,664 508.6,663.1 C515,664 520,665 525.2,665.3 M500.8,675.3 C507,675 515,675 525.2,674.2 M503,688 C510,686 518,686 524,688" stroke-width="1"/>
<path d="M478.7,689.7 L478.9,705.2 L485.3,705" stroke-width="0.9" stroke="#444"/>
<g stroke-width="0.9" stroke="#2a2a2a">
<path d="M410.5,436 C412,455 414,468 415.5,474 C419,488 421,496 424,504 C423,516 422,530 421.8,540 C422.5,562 423,582 424.5,602"/>
<path d="M455.5,436 C454.5,455 453.5,475 453,494 C451.5,508 450.5,522 450,540 C450,560 450.5,585 451,600"/>
<path d="M472.5,436 C472,452 472,462 472,472 C470.5,482 470,492 470,500 M474,540 C479,552 484,563 488,572 C491,584 493,594 495,602"/>
<path d="M517.5,434 C515,450 511,468 507,484 C505,494 504,505 504.5,516"/>
<path d="M431,640 C434,652 437,662 440,675 M463,684 C465,695 467,705 468,714"/>
<path d="M507,642 C508,650 509.5,658 510.5,662 M524.5,640 C524,650 524,658 524.5,664"/>
<path d="M387,308 C381,317 376,324 372,330 C366,340 360,350 355,359 M342,386 C337,392 332,397 328,400"/>
<path d="M563,276 C575,283 590,292 605,301 M618,312 C628,320 636,330 644,336"/>
<path d="M424,145 C421,170 421,200 423,232 M507,160 C509,185 510,205 514,222"/>
</g>
</g>
</g>
</svg>
</body></html>
